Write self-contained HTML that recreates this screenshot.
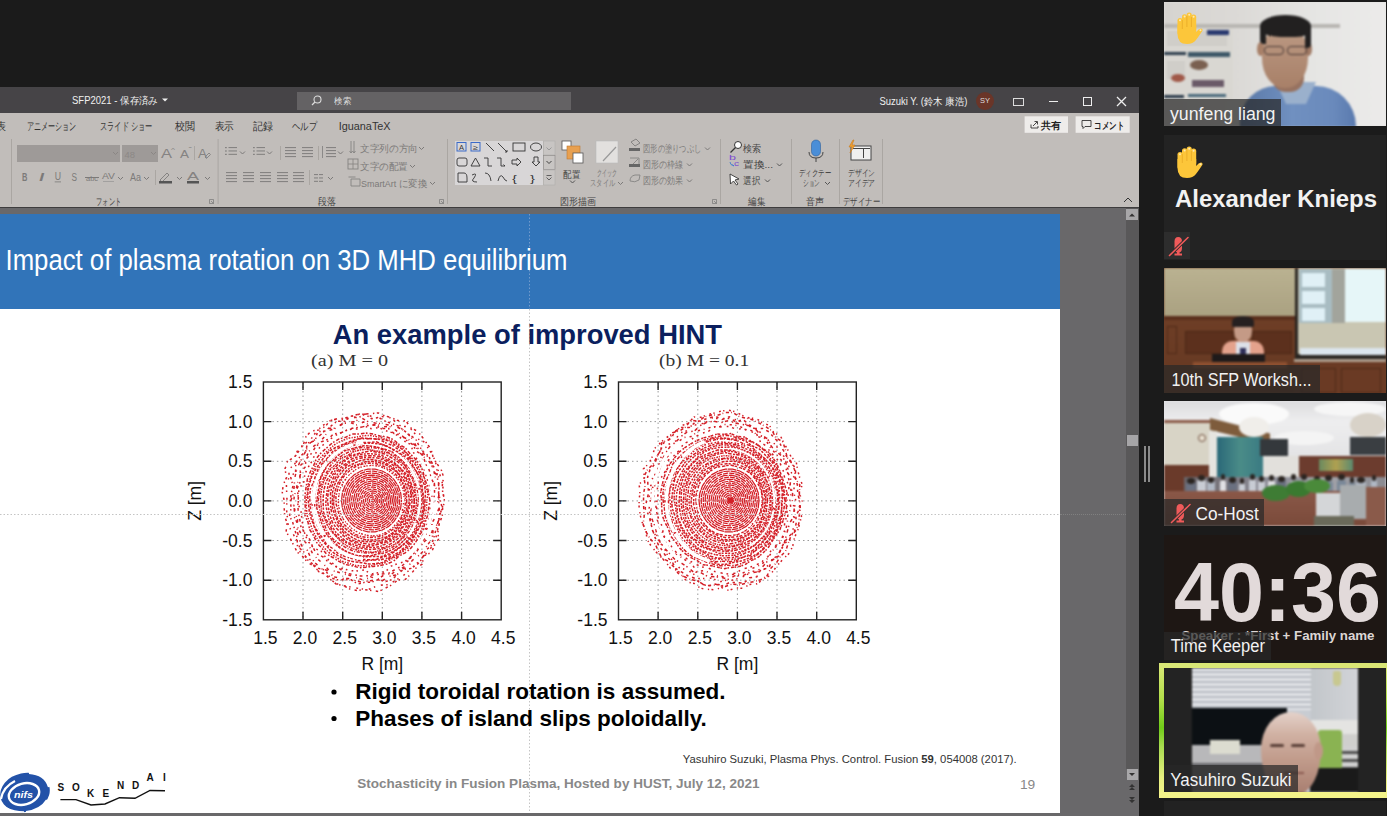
<!DOCTYPE html>
<html><head><meta charset="utf-8">
<style>
*{margin:0;padding:0;box-sizing:border-box}
html,body{width:1387px;height:816px;overflow:hidden;background:#1b1b1b;font-family:"Liberation Sans",sans-serif}
.a{position:absolute}
#ppt{position:absolute;left:0;top:87px;width:1139px;height:729px;background:#69686a;overflow:hidden}
#title{position:absolute;left:0;top:0;width:1139px;height:26px;background:#464447;color:#f0f0f0;font-size:10px}
#ribbon{position:absolute;left:0;top:26px;width:1139px;height:94px;background:#c1bdba;color:#333}
.tab{position:absolute;top:6px;font-size:10.5px;color:#333;white-space:nowrap;transform-origin:0 0}
.ic{position:absolute;color:#7c7a79;white-space:nowrap;font-size:10px;transform-origin:0 0}
.tx{position:absolute;color:#7c7a79;white-space:nowrap;font-size:9.5px;transform-origin:0 0}
.tk{position:absolute;color:#3a3a3a;white-space:nowrap;font-size:9.5px;transform-origin:0 0}
.sep{position:absolute;width:1px;background:#aaa6a3}
.grp{position:absolute;top:82px;font-size:9px;color:#444;white-space:nowrap}
#slide{position:absolute;left:0;top:127px;width:1060px;height:599px;background:#fff;overflow:hidden}
#hdr{position:absolute;left:0;top:0;width:1060px;height:95px;background:#3174b9}
#scroll{position:absolute;left:1126px;top:121px;width:13px;height:561px;background:#595859}
#side{position:absolute;left:1139px;top:0;width:248px;height:816px;background:#1b1b1b}
.tile{position:absolute;left:25px;width:222px;overflow:hidden}
.nm{position:absolute;left:0;bottom:0;height:27px;background:rgba(40,40,40,.72);color:#f4f4f4;font-size:17px;line-height:27px;padding:0 6px;white-space:nowrap}
.vid{position:absolute;left:0;top:0;width:222px;height:125px;overflow:hidden;filter:blur(1px)}
.mute{position:absolute;width:26px;height:27px;background:#2d2d2d}
</style></head>
<body>
<div id="ppt">
  <div id="title">
    <svg class="a" style="left:72px;top:0" width="100" height="26"><text x="0" y="17" textLength="86" lengthAdjust="spacingAndGlyphs" font-family="Liberation Sans" font-size="10" fill="#f0f0f0">SFP2021 - 保存済み</text><path d="M90 11.5h6l-3 3z" fill="#f0f0f0"/></svg>
    <div class="a" style="left:297px;top:5px;width:274px;height:18px;background:#646264"></div>
    <svg class="a" style="left:311px;top:8px" width="11" height="11" viewBox="0 0 11 11"><circle cx="6.5" cy="4.5" r="3.5" fill="none" stroke="#ddd" stroke-width="1.1"/><path d="M4 7L1 10" stroke="#ddd" stroke-width="1.2"/></svg>
    <svg class="a" style="left:334px;top:0" width="30" height="26"><text x="0" y="17" textLength="17" lengthAdjust="spacingAndGlyphs" font-family="Liberation Sans" font-size="9" fill="#ddd">検索</text></svg>
    <svg class="a" style="left:879px;top:0" width="92" height="26"><text x="0.5" y="17.5" textLength="88" lengthAdjust="spacingAndGlyphs" font-family="Liberation Sans" font-size="10" fill="#f0f0f0">Suzuki Y. (鈴木 康浩)</text></svg>
    <div class="a" style="left:976px;top:5px;width:18px;height:18px;border-radius:50%;background:#6a3528;color:#ddd;font-size:7.5px;line-height:18px;text-align:center">SY</div>
    <div class="a" style="left:1013px;top:11px;width:11px;height:8px;border:1.3px solid #ddd"></div>
    <div class="a" style="left:1049px;top:14px;width:9px;height:1.3px;background:#eee"></div>
    <div class="a" style="left:1083px;top:10px;width:9px;height:9px;border:1.3px solid #eee"></div>
    <svg class="a" style="left:1116px;top:9px" width="11" height="11" viewBox="0 0 11 11"><path d="M1 1L10 10M10 1L1 10" stroke="#eee" stroke-width="1.3"/></svg>
  </div>
  <div id="ribbon">
    <svg class="a" style="left:0;top:0" width="1139" height="94" font-family="Liberation Sans, sans-serif"><text x="-4" y="17" textLength="10" lengthAdjust="spacingAndGlyphs" font-size="10.5" fill="#333" font-weight="normal">表</text><text x="26.5" y="17" textLength="49.8" lengthAdjust="spacingAndGlyphs" font-size="10.5" fill="#333" font-weight="normal">アニメーション</text><text x="100" y="17" textLength="52.6" lengthAdjust="spacingAndGlyphs" font-size="10.5" fill="#333" font-weight="normal">スライド ショー</text><text x="175" y="17" textLength="20" lengthAdjust="spacingAndGlyphs" font-size="10.5" fill="#333" font-weight="normal">校閲</text><text x="214.8" y="17" textLength="19.2" lengthAdjust="spacingAndGlyphs" font-size="10.5" fill="#333" font-weight="normal">表示</text><text x="253" y="17" textLength="20" lengthAdjust="spacingAndGlyphs" font-size="10.5" fill="#333" font-weight="normal">記録</text><text x="292" y="17" textLength="25" lengthAdjust="spacingAndGlyphs" font-size="10.5" fill="#333" font-weight="normal">ヘルプ</text><text x="338.7" y="16.5" textLength="51.9" lengthAdjust="spacingAndGlyphs" font-size="10.5" fill="#333" font-weight="normal">IguanaTeX</text><rect x="1024.6" y="3.3" width="43.4" height="16.5" fill="#eeecea" /><rect x="1075.6" y="3.3" width="54.1" height="16.5" fill="#eeecea" /><path transform="translate(0 -113)" d="M1031 124.5v3.5h7v-2M1033 126l4-4M1034.5 121.5h3v3" stroke="#333" stroke-width="0.9" fill="none" /><text x="1041" y="15.5" textLength="20" lengthAdjust="spacingAndGlyphs" font-size="10" fill="#222" font-weight="bold">共有</text><path transform="translate(0 -113)" d="M1082 120.5h9v6h-6l-2 2v-2h-1z" stroke="#333" stroke-width="0.9" fill="none" /><text x="1094" y="15.5" textLength="30" lengthAdjust="spacingAndGlyphs" font-size="10" fill="#222" font-weight="bold">コメント</text><rect x="11" y="26" width="1" height="65" fill="#aaa6a2" /><rect x="217.6" y="26" width="1" height="65" fill="#aaa6a2" /><rect x="447" y="26" width="1" height="65" fill="#aaa6a2" /><rect x="720" y="26" width="1" height="65" fill="#aaa6a2" /><rect x="791" y="26" width="1" height="65" fill="#aaa6a2" /><rect x="839" y="26" width="1" height="65" fill="#aaa6a2" /><rect x="882" y="26" width="1" height="65" fill="#aaa6a2" /><rect x="17" y="32" width="103" height="17" fill="#9e9a98" /><rect x="122" y="32" width="36" height="17" fill="#9e9a98" /><path transform="translate(0 -113)" d="M113 152l2.5 2.5l2.5 -2.5" stroke="#8a8684" stroke-width="1" fill="none" /><path transform="translate(0 -113)" d="M151 152l2.5 2.5l2.5 -2.5" stroke="#8a8684" stroke-width="1" fill="none" /><text x="124.5" y="44.5" textLength="10.5" lengthAdjust="spacingAndGlyphs" font-size="9.5" fill="#8c8886" font-weight="normal">48</text><text x="161" y="45" textLength="11" lengthAdjust="spacingAndGlyphs" font-size="12.5" fill="#858382" font-weight="normal">A</text><text x="171" y="39" textLength="4" lengthAdjust="spacingAndGlyphs" font-size="6" fill="#858382" font-weight="normal">^</text><text x="180" y="45" textLength="9" lengthAdjust="spacingAndGlyphs" font-size="11" fill="#858382" font-weight="normal">A</text><text x="188.5" y="39" textLength="3.5" lengthAdjust="spacingAndGlyphs" font-size="7" fill="#858382" font-weight="normal">ˇ</text><rect x="194" y="33" width="1" height="14" fill="#aaa6a2" /><text x="198" y="45" textLength="9" lengthAdjust="spacingAndGlyphs" font-size="12" fill="#858382" font-weight="normal">A</text><path transform="translate(0 -113)" d="M205 157l4-4l1.5 1.5l-4 4z" stroke="#858382" stroke-width="0.9" fill="none" /><text x="22" y="67.5" textLength="5.4" lengthAdjust="spacingAndGlyphs" font-size="10" fill="#7c7a79" font-weight="bold">B</text><text x="39.3" y="67.5" textLength="4.7" lengthAdjust="spacingAndGlyphs" font-size="10" fill="#7c7a79" font-weight="bold" font-style="italic">I</text><text x="54.7" y="66.5" textLength="6.3" lengthAdjust="spacingAndGlyphs" font-size="10" fill="#7c7a79" font-weight="normal">U</text><rect x="54.7" y="68.5" width="6.3" height="0.8" fill="#7c7a79" /><text x="71.5" y="67.5" textLength="5.5" lengthAdjust="spacingAndGlyphs" font-size="10" fill="#7c7a79" font-weight="normal">S</text><text x="86" y="67.5" textLength="12" lengthAdjust="spacingAndGlyphs" font-size="8" fill="#7c7a79" font-weight="normal">abc</text><rect x="85" y="64" width="14" height="1" fill="#7c7a79" /><text x="102" y="65.5" textLength="13" lengthAdjust="spacingAndGlyphs" font-size="9.5" fill="#7c7a79" font-weight="normal">AV</text><path transform="translate(0 -113)" d="M103 181.5h11" stroke="#9a9898" stroke-width="0.8" fill="none" /><path transform="translate(0 -113)" d="M118 177l2.5 2.5l2.5 -2.5" stroke="#7c7a79" stroke-width="1" fill="none" /><text x="130" y="67.5" textLength="11" lengthAdjust="spacingAndGlyphs" font-size="10" fill="#7c7a79" font-weight="normal">Aa</text><path transform="translate(0 -113)" d="M144 177l2.5 2.5l2.5 -2.5" stroke="#7c7a79" stroke-width="1" fill="none" /><rect x="155" y="57" width="1" height="15" fill="#aaa6a2" /><path transform="translate(0 -113)" d="M160 180l7-7l2 2l-7 7z" stroke="#858382" stroke-width="1" fill="none" /><rect x="159" y="68" width="13" height="2.5" fill="#555" /><path transform="translate(0 -113)" d="M177 177l2.5 2.5l2.5 -2.5" stroke="#7c7a79" stroke-width="1" fill="none" /><text x="187" y="67" textLength="12" lengthAdjust="spacingAndGlyphs" font-size="11" fill="#858382" font-weight="normal">A</text><rect x="187" y="68" width="12" height="2.5" fill="#555" /><path transform="translate(0 -113)" d="M205 177l2.5 2.5l2.5 -2.5" stroke="#7c7a79" stroke-width="1" fill="none" /><text x="96" y="91.5" textLength="25" lengthAdjust="spacingAndGlyphs" font-size="9.5" fill="#444" font-weight="normal">フォント</text><path transform="translate(0 -113)" d="M209.5 199.5h4v4h-4zM211 201l2.5 2.5" stroke="#777" stroke-width="0.7" fill="none" /><rect x="225" y="34" width="1.8" height="1.2" fill="#858382" /><rect x="228.5" y="34" width="8.5" height="1.1" fill="#858382" /><rect x="225" y="37.4" width="1.8" height="1.2" fill="#858382" /><rect x="228.5" y="37.4" width="8.5" height="1.1" fill="#858382" /><rect x="225" y="40.8" width="1.8" height="1.2" fill="#858382" /><rect x="228.5" y="40.8" width="8.5" height="1.1" fill="#858382" /><path transform="translate(0 -113)" d="M240 151.5l2.5 2.5l2.5 -2.5" stroke="#7c7a79" stroke-width="1" fill="none" /><rect x="253" y="34" width="1.8" height="1.2" fill="#858382" /><rect x="256.5" y="34" width="8.5" height="1.1" fill="#858382" /><rect x="253" y="37.4" width="1.8" height="1.2" fill="#858382" /><rect x="256.5" y="37.4" width="8.5" height="1.1" fill="#858382" /><rect x="253" y="40.8" width="1.8" height="1.2" fill="#858382" /><rect x="256.5" y="40.8" width="8.5" height="1.1" fill="#858382" /><path transform="translate(0 -113)" d="M267 151.5l2.5 2.5l2.5 -2.5" stroke="#7c7a79" stroke-width="1" fill="none" /><rect x="280" y="33" width="1" height="14" fill="#aaa6a2" /><rect x="285" y="34" width="11" height="1.1" fill="#858382" /><rect x="285" y="37" width="11" height="1.1" fill="#858382" /><rect x="285" y="40" width="11" height="1.1" fill="#858382" /><rect x="285" y="43" width="11" height="1.1" fill="#858382" /><rect x="302" y="34" width="11" height="1.1" fill="#858382" /><rect x="302" y="37" width="11" height="1.1" fill="#858382" /><rect x="302" y="40" width="11" height="1.1" fill="#858382" /><rect x="302" y="43" width="11" height="1.1" fill="#858382" /><rect x="318" y="33" width="1" height="14" fill="#aaa6a2" /><rect x="326" y="34" width="10" height="1.1" fill="#858382" /><rect x="326" y="37" width="10" height="1.1" fill="#858382" /><rect x="326" y="40" width="10" height="1.1" fill="#858382" /><rect x="326" y="43" width="10" height="1.1" fill="#858382" /><path transform="translate(0 -113)" d="M322.5 146v12" stroke="#858382" stroke-width="0.9" fill="none" /><path transform="translate(0 -113)" d="M338 151.5l2.5 2.5l2.5 -2.5" stroke="#7c7a79" stroke-width="1" fill="none" /><path transform="translate(0 -113)" d="M351 141v12M354 141v12M349.5 151l1.5 2l1.5 -2M352.5 151l1.5 2l1.5 -2" stroke="#858382" stroke-width="0.9" fill="none" /><text x="360" y="39" textLength="58" lengthAdjust="spacingAndGlyphs" font-size="9.5" fill="#7c7a79" font-weight="normal">文字列の方向</text><path transform="translate(0 -113)" d="M419 147l2.5 2.5l2.5 -2.5" stroke="#7c7a79" stroke-width="1" fill="none" /><rect x="348" y="46" width="10" height="10" fill="none" stroke="#858382" stroke-width="0.9"/><path transform="translate(0 -113)" d="M353 159v10M348 164h10" stroke="#858382" stroke-width="0.8" fill="none" /><text x="360" y="56.5" textLength="48" lengthAdjust="spacingAndGlyphs" font-size="9.5" fill="#7c7a79" font-weight="normal">文字の配置</text><path transform="translate(0 -113)" d="M410 165l2.5 2.5l2.5 -2.5" stroke="#7c7a79" stroke-width="1" fill="none" /><path transform="translate(0 -113)" d="M348.5 177h7M351 179h9v7h-9z" stroke="#858382" stroke-width="0.9" fill="none" /><text x="361" y="74" textLength="66" lengthAdjust="spacingAndGlyphs" font-size="9.5" fill="#7c7a79" font-weight="normal">SmartArt に変換</text><path transform="translate(0 -113)" d="M430 182l2.5 2.5l2.5 -2.5" stroke="#7c7a79" stroke-width="1" fill="none" /><rect x="226" y="59" width="11" height="1.1" fill="#858382" /><rect x="226" y="62" width="11" height="1.1" fill="#858382" /><rect x="226" y="65" width="11" height="1.1" fill="#858382" /><rect x="226" y="68" width="11" height="1.1" fill="#858382" /><rect x="243" y="59" width="11" height="1.1" fill="#858382" /><rect x="243" y="62" width="11" height="1.1" fill="#858382" /><rect x="243" y="65" width="11" height="1.1" fill="#858382" /><rect x="243" y="68" width="11" height="1.1" fill="#858382" /><rect x="260" y="59" width="11" height="1.1" fill="#858382" /><rect x="260" y="62" width="11" height="1.1" fill="#858382" /><rect x="260" y="65" width="11" height="1.1" fill="#858382" /><rect x="260" y="68" width="11" height="1.1" fill="#858382" /><rect x="277" y="59" width="11" height="1.1" fill="#858382" /><rect x="277" y="62" width="11" height="1.1" fill="#858382" /><rect x="277" y="65" width="11" height="1.1" fill="#858382" /><rect x="277" y="68" width="11" height="1.1" fill="#858382" /><rect x="293" y="59" width="11" height="1.1" fill="#858382" /><rect x="293" y="62" width="11" height="1.1" fill="#858382" /><rect x="293" y="65" width="11" height="1.1" fill="#858382" /><rect x="293" y="68" width="11" height="1.1" fill="#858382" /><rect x="309" y="57" width="1" height="15" fill="#aaa6a2" /><rect x="314" y="61" width="4" height="1.1" fill="#858382" /><rect x="314" y="64.4" width="4" height="1.1" fill="#858382" /><rect x="314" y="67.8" width="4" height="1.1" fill="#858382" /><rect x="319" y="61" width="4" height="1.1" fill="#858382" /><rect x="319" y="64.4" width="4" height="1.1" fill="#858382" /><rect x="319" y="67.8" width="4" height="1.1" fill="#858382" /><path transform="translate(0 -113)" d="M328 177l2.5 2.5l2.5 -2.5" stroke="#7c7a79" stroke-width="1" fill="none" /><text x="318" y="91.5" textLength="18" lengthAdjust="spacingAndGlyphs" font-size="9.5" fill="#444" font-weight="normal">段落</text><path transform="translate(0 -113)" d="M439.5 199.5h4v4h-4zM441 201l2.5 2.5" stroke="#777" stroke-width="0.7" fill="none" /><rect x="455" y="28" width="88" height="44" fill="#d8d6d7" /><rect x="543.5" y="28" width="11.5" height="14" fill="#c8c5c3" stroke="#b0adab" stroke-width="0.6"/><rect x="543.5" y="42.5" width="11.5" height="14" fill="#c8c5c3" stroke="#8a8886" stroke-width="0.6"/><rect x="543.5" y="57" width="11.5" height="15" fill="#c8c5c3" stroke="#b0adab" stroke-width="0.6"/><path transform="translate(0 -113)" d="M546.5 147.5l2.5 2.5l2.5 -2.5" stroke="#999" stroke-width="1" fill="none" /><path transform="translate(0 -113)" d="M546.5 161l2.5 2.5l2.5 -2.5" stroke="#333" stroke-width="0.9" fill="none" /><path transform="translate(0 -113)" d="M546.5 175.5h5M546.5 177.5l2.5 2.5l2.5 -2.5" stroke="#555" stroke-width="0.9" fill="none" /><rect x="457" y="29.5" width="9" height="8.5" fill="none" stroke="#3a6ac8" stroke-width="1"/><text x="459" y="37" textLength="5" lengthAdjust="spacingAndGlyphs" font-size="7" fill="#333" font-weight="normal">A</text><rect x="471" y="29.5" width="9" height="8.5" fill="none" stroke="#3a6ac8" stroke-width="1"/><text x="473" y="37" textLength="5" lengthAdjust="spacingAndGlyphs" font-size="7" fill="#333" font-weight="normal">≥</text><path transform="translate(0 -113)" d="M486 143l8 8M498 143l9 9M505 152l2 0l0 -2" stroke="#333" stroke-width="0.9" fill="none" /><rect x="513" y="30" width="12" height="8" fill="none" stroke="#333" stroke-width="0.9"/><ellipse cx="536" cy="147" rx="5.5" ry="4" fill="none" stroke="#333" stroke-width="0.9" transform="translate(0 -113)"/><rect x="457" y="45" width="10" height="8" fill="none" stroke="#333" stroke-width="0.9" rx="2"/><path transform="translate(0 -113)" d="M471 166l4.5 -8l4.5 8z" stroke="#333" stroke-width="0.9" fill="none" /><path transform="translate(0 -113)" d="M484 158h4v8h4M497 158h4v8h4l-1.5 -1.5" stroke="#333" stroke-width="0.9" fill="none" /><path transform="translate(0 -113)" d="M512 160h5v-2l4 4l-4 4v-2h-5z" stroke="#333" stroke-width="0.9" fill="none" /><path transform="translate(0 -113)" d="M534 157v5h-2l4 4l4 -4h-2v-5z" stroke="#333" stroke-width="0.9" fill="none" /><path transform="translate(0 -113)" d="M458 173h6q3 0 3 5v4h-9z" stroke="#333" stroke-width="0.9" fill="none" /><path transform="translate(0 -113)" d="M472 175q6 -3 2 3q-4 4 3 4" stroke="#333" stroke-width="0.9" fill="none" /><path transform="translate(0 -113)" d="M485 173q5 0 6 8M498 181q2 -8 5 -4q2 4 4 4" stroke="#333" stroke-width="0.9" fill="none" /><text x="512" y="69" textLength="5" lengthAdjust="spacingAndGlyphs" font-size="9" fill="#333" font-weight="normal">{</text><text x="530" y="69" textLength="5" lengthAdjust="spacingAndGlyphs" font-size="9" fill="#333" font-weight="normal">}</text><rect x="562" y="28" width="9" height="9" fill="#fff" stroke="#555" stroke-width="0.8"/><rect x="567" y="33" width="13" height="13" fill="#e8a050" stroke="#c07830" stroke-width="0.6"/><rect x="573" y="40" width="10" height="10" fill="#fff" stroke="#555" stroke-width="0.8"/><text x="563" y="65" textLength="17" lengthAdjust="spacingAndGlyphs" font-size="9.5" fill="#444" font-weight="normal">配置</text><path transform="translate(0 -113)" d="M570 180.5l2.5 2.5l2.5 -2.5" stroke="#555" stroke-width="1" fill="none" /><rect x="596" y="28" width="22" height="22" fill="#e2e0de" stroke="#bbb" stroke-width="0.6"/><path transform="translate(0 -113)" d="M603 161l13 -14" stroke="#999" stroke-width="1.2" fill="none" /><text x="597" y="63" textLength="20" lengthAdjust="spacingAndGlyphs" font-size="9" fill="#7c7a79" font-weight="normal">クイック</text><text x="590" y="73" textLength="25" lengthAdjust="spacingAndGlyphs" font-size="9" fill="#7c7a79" font-weight="normal">スタイル</text><path transform="translate(0 -113)" d="M618 182l2.5 2.5l2.5 -2.5" stroke="#7c7a79" stroke-width="1" fill="none" /><path transform="translate(0 -113)" d="M631 142l5 -3l4 4l-5 3zM629 149h10" stroke="#858382" stroke-width="1" fill="none" /><rect x="629" y="35" width="11" height="3" fill="#666" /><text x="643" y="39" textLength="58" lengthAdjust="spacingAndGlyphs" font-size="9.5" fill="#7c7a79" font-weight="normal">図形の塗りつぶし</text><path transform="translate(0 -113)" d="M705 147.5l2.5 2.5l2.5 -2.5" stroke="#7c7a79" stroke-width="1" fill="none" /><path transform="translate(0 -113)" d="M630 158h9v6M632 165l6 -6" stroke="#858382" stroke-width="0.9" fill="none" /><rect x="629" y="51" width="11" height="3" fill="#666" /><text x="643" y="55" textLength="40" lengthAdjust="spacingAndGlyphs" font-size="9.5" fill="#7c7a79" font-weight="normal">図形の枠線</text><path transform="translate(0 -113)" d="M687 163.5l2.5 2.5l2.5 -2.5" stroke="#7c7a79" stroke-width="1" fill="none" /><path transform="translate(0 -113)" d="M630 181q0 -5 5 -6l5 0l-1 5q-4 3 -9 1z" stroke="#858382" stroke-width="0.9" fill="none" /><text x="643" y="71" textLength="40" lengthAdjust="spacingAndGlyphs" font-size="9.5" fill="#7c7a79" font-weight="normal">図形の効果</text><path transform="translate(0 -113)" d="M687 179.5l2.5 2.5l2.5 -2.5" stroke="#7c7a79" stroke-width="1" fill="none" /><text x="560" y="91.5" textLength="36" lengthAdjust="spacingAndGlyphs" font-size="9.5" fill="#444" font-weight="normal">図形描画</text><path transform="translate(0 -113)" d="M712.5 199.5h4v4h-4zM714 201l2.5 2.5" stroke="#777" stroke-width="0.7" fill="none" /><circle cx="738" cy="145" r="3.5" fill="#fff" stroke="#333" stroke-width="1" transform="translate(0 -113)"/><path transform="translate(0 -113)" d="M735.5 147.5l-5 5" stroke="#333" stroke-width="1.2" fill="none" /><text x="743" y="38.5" textLength="18" lengthAdjust="spacingAndGlyphs" font-size="9.5" fill="#444" font-weight="normal">検索</text><text x="729" y="47" textLength="7" lengthAdjust="spacingAndGlyphs" font-size="7" fill="#7a4ad0" font-weight="normal">b</text><text x="734" y="53" textLength="5" lengthAdjust="spacingAndGlyphs" font-size="7" fill="#7a4ad0" font-weight="normal">c</text><path transform="translate(0 -113)" d="M730 162q0 3 4 4l-1.5 -1.5" stroke="#3a7ad0" stroke-width="0.9" fill="none" /><text x="743" y="55" textLength="30" lengthAdjust="spacingAndGlyphs" font-size="9.5" fill="#444" font-weight="normal">置換...</text><path transform="translate(0 -113)" d="M777 163.5l2.5 2.5l2.5 -2.5" stroke="#555" stroke-width="1" fill="none" /><path transform="translate(0 -113)" d="M730 174l9 5l-4 1l3 4l-1.5 1l-3 -4l-3 3z" stroke="#333" stroke-width="0.9" fill="#fff" /><text x="743" y="71" textLength="17" lengthAdjust="spacingAndGlyphs" font-size="9.5" fill="#444" font-weight="normal">選択</text><path transform="translate(0 -113)" d="M765 179.5l2.5 2.5l2.5 -2.5" stroke="#555" stroke-width="1" fill="none" /><text x="748" y="91.5" textLength="17" lengthAdjust="spacingAndGlyphs" font-size="9.5" fill="#444" font-weight="normal">編集</text><rect x="811.5" y="27" width="9" height="16" fill="#4a8ed8" rx="4.5" stroke="#2f5f9a" stroke-width="0.6"/><path transform="translate(0 -113)" d="M809 152q0 6 7 6q7 0 7 -6M816 158v4" stroke="#444" stroke-width="1" fill="none" /><text x="799" y="63" textLength="32" lengthAdjust="spacingAndGlyphs" font-size="9" fill="#444" font-weight="normal">ディクテー</text><text x="803" y="73" textLength="17" lengthAdjust="spacingAndGlyphs" font-size="9" fill="#444" font-weight="normal">ション</text><path transform="translate(0 -113)" d="M825 182l2.5 2.5l2.5 -2.5" stroke="#555" stroke-width="1" fill="none" /><text x="806" y="91.5" textLength="18" lengthAdjust="spacingAndGlyphs" font-size="9.5" fill="#444" font-weight="normal">音声</text><rect x="851" y="33" width="20" height="14" fill="#f0f0f0" stroke="#444" stroke-width="1"/><rect x="863" y="35" width="1" height="10" fill="#444" /><rect x="853" y="35" width="17" height="1" fill="#444" /><path transform="translate(0 -113)" d="M853 140l-4 7h3l-2 6l5 -8h-3l2 -5z" stroke="#c87a20" stroke-width="0.6" fill="#f0a030" /><text x="848" y="63" textLength="27" lengthAdjust="spacingAndGlyphs" font-size="9" fill="#444" font-weight="normal">デザイン</text><text x="848" y="73" textLength="27" lengthAdjust="spacingAndGlyphs" font-size="9" fill="#444" font-weight="normal">アイデア</text><text x="843" y="91.5" textLength="37" lengthAdjust="spacingAndGlyphs" font-size="9.5" fill="#444" font-weight="normal">デザイナー</text><path transform="translate(0 -113)" d="M1124 202l4 -4l4 4" stroke="#333" stroke-width="1" fill="none" /></svg>
  </div>
  <div class="a" style="left:0;top:120px;width:1139px;height:1px;background:#3e3d3e"></div>
  <div class="a" style="left:1060px;top:427px;width:66px;height:0;border-top:1px dotted #808080"></div>
  <div id="scroll">
    <div class="a" style="left:0;top:1px;width:12px;height:11px;background:#a8a7a9"></div>
    <svg class="a" style="left:0;top:1px" width="12" height="11"><path d="M3 7.5L6 4.5L9 7.5Z" fill="#333"/></svg>
    <div class="a" style="left:1px;top:227px;width:11px;height:11px;background:#a6a5a7"></div>
  </div>
  <div class="a" style="left:1126.5px;top:682px;width:11.5px;height:11px;background:#a8a7a9"></div>
  <svg class="a" style="left:1126px;top:682px" width="12" height="11"><path d="M3 4L6 7L9 4Z" fill="#333"/></svg>
  <svg class="a" style="left:1126px;top:694px" width="12" height="24"><path d="M3 6L6 3L9 6ZM3 9L6 6L9 9ZM3 16L6 19L9 16ZM3 19L6 22L9 19Z" fill="#333"/></svg>
  <div id="slide">
    <div id="hdr"></div>
    <svg class="a" style="left:0;top:0" width="1060" height="599"><path d="M303 168V405.8M263.4 207.6H501.2M342.7 168V405.8M263.4 247.3H501.2M382.3 168V405.8M263.4 286.9H501.2M421.9 168V405.8M263.4 326.5H501.2M461.6 168V405.8M263.4 366.2H501.2" stroke="#9a9a9a" stroke-width="1" stroke-dasharray="1.5 3" fill="none"/><path d="M658.1 168V405.8M618.5 207.6H856.3M697.8 168V405.8M618.5 247.3H856.3M737.4 168V405.8M618.5 286.9H856.3M777 168V405.8M618.5 326.5H856.3M816.7 168V405.8M618.5 366.2H856.3" stroke="#9a9a9a" stroke-width="1" stroke-dasharray="1.5 3" fill="none"/><g fill="none" stroke="#d41e26"><path d="M374.4 286.5L374.3 287.1L374 287.6L373.5 288L372.9 288.1L372.4 288L371.9 287.6L371.5 287.1L371.4 286.5L371.5 285.9L371.9 285.4L372.4 285L372.9 284.9L373.5 285L374 285.4L374.3 285.9Z" stroke-dasharray="4.7 1.1" stroke-dashoffset="0.2" stroke-width="1.25" opacity="1"/><path d="M376.2 286.5L376 287.9L375.2 289L374.1 289.8L372.8 290.1L371.5 289.8L370.4 289L369.7 287.9L369.4 286.5L369.7 285.1L370.4 284L371.5 283.2L372.8 282.9L374.1 283.2L375.2 284L376 285.1Z" stroke-dasharray="4.1 0.9" stroke-dashoffset="1.5" stroke-width="1.25" opacity="1"/><path d="M378 286.5L377.6 288.6L376.5 290.4L374.8 291.6L372.7 292.1L370.7 291.6L369 290.4L367.8 288.6L367.4 286.5L367.8 284.4L369 282.6L370.7 281.4L372.7 280.9L374.8 281.4L376.5 282.6L377.6 284.4Z" stroke-dasharray="9 1.1" stroke-dashoffset="3.3" stroke-width="1.25" opacity="1"/><path d="M379.9 286.5L379.3 289.4L377.7 291.8L375.4 293.5L372.7 294.1L369.9 293.5L367.6 291.8L366 289.4L365.5 286.5L366 283.6L367.6 281.2L369.9 279.5L372.7 278.9L375.4 279.5L377.7 281.2L379.3 283.6Z" stroke-dasharray="4.9 0.9" stroke-dashoffset="7.9" stroke-width="1.25" opacity="1"/><path d="M381.7 286.5L381 290.2L379 293.3L376 295.3L372.6 296.1L369.1 295.3L366.1 293.3L364.2 290.2L363.5 286.5L364.2 282.8L366.1 279.7L369.1 277.7L372.6 276.9L376 277.7L379 279.7L381 282.8Z" stroke-dasharray="7.9 0.9" stroke-dashoffset="3.4" stroke-width="1.25" opacity="1"/><path d="M383.5 286.5L382.6 290.9L380.2 294.7L376.7 297.2L372.5 298.1L368.3 297.2L364.7 294.7L362.3 290.9L361.5 286.5L362.3 282.1L364.7 278.3L368.3 275.8L372.5 274.9L376.7 275.8L380.2 278.3L382.6 282.1Z" stroke-dasharray="4.3 1.1" stroke-dashoffset="6.5" stroke-width="1.25" opacity="1"/><path d="M385.3 286.5L384.3 291.7L381.5 296.1L377.3 299L372.4 300L367.4 299L363.3 296.1L360.5 291.7L359.5 286.5L360.5 281.3L363.3 276.9L367.4 274L372.4 273L377.3 274L381.5 276.9L384.3 281.3Z" stroke-dasharray="5.3 1.1" stroke-dashoffset="3.8" stroke-width="1.25" opacity="1"/><path d="M387.1 286.5L386 292.4L382.7 297.5L377.9 300.9L372.3 302L366.6 300.9L361.8 297.5L358.6 292.4L357.5 286.5L358.6 280.6L361.8 275.5L366.6 272.1L372.3 271L377.9 272.1L382.7 275.5L386 280.6Z" stroke-dasharray="4.1 0.8" stroke-dashoffset="7.8" stroke-width="1.25" opacity="1"/><path d="M388.9 286.5L387.6 293.2L384 298.9L378.6 302.7L372.2 304L365.8 302.7L360.4 298.9L356.8 293.2L355.5 286.5L356.8 279.8L360.4 274.1L365.8 270.3L372.2 269L378.6 270.3L384 274.1L387.6 279.8Z" stroke-dasharray="8 0.9" stroke-dashoffset="0.1" stroke-width="1.25" opacity="1"/><path d="M390.7 286.5L389.3 294L385.3 300.3L379.2 304.5L372.1 306L365 304.5L358.9 300.3L354.9 294L353.5 286.5L354.9 279L358.9 272.7L365 268.5L372.1 267L379.2 268.5L385.3 272.7L389.3 279Z" stroke-dasharray="8.4 0.5" stroke-dashoffset="4" stroke-width="1.25" opacity="1"/><path d="M392.5 286.5L391.3 293.9L387.7 300.3L382.3 305.1L375.6 307.7L368.4 307.7L361.8 305.1L356.3 300.3L352.7 293.9L351.5 286.5L352.7 279.1L356.3 272.7L361.8 267.9L368.4 265.3L375.6 265.3L382.3 267.9L387.7 272.7L391.3 279.1Z" stroke-dasharray="5.6 1.1" stroke-dashoffset="1.4" stroke-width="1.25" opacity="1"/><path d="M394.3 286.5L393.2 293.8L390 300.3L385.1 305.5L378.8 308.9L371.9 310L365 308.9L358.7 305.5L353.8 300.3L350.6 293.8L349.5 286.5L350.6 279.2L353.8 272.7L358.7 267.5L365 264.1L371.9 263L378.8 264.1L385.1 267.5L390 272.7L393.2 279.2Z" stroke-dasharray="8.6 0.6" stroke-dashoffset="3" stroke-width="1.25" opacity="1"/><path d="M396.1 286.5L395 294L391.9 300.9L387 306.4L380.7 310.3L373.6 311.9L366.4 311.4L359.7 308.6L354 303.9L349.9 297.6L347.8 290.3L347.8 282.7L349.9 275.4L354 269.1L359.7 264.4L366.4 261.6L373.6 261.1L380.7 262.7L387 266.6L391.9 272.1L395 279Z" stroke-dasharray="6.9 0.7" stroke-dashoffset="0.8" stroke-width="1.25" opacity="1"/><path d="M397.9 286.5L397 293.9L394.1 300.8L389.6 306.6L383.8 310.9L377.1 313.4L369.9 313.9L363 312.4L356.6 309L351.4 303.9L347.7 297.5L345.8 290.2L345.8 282.8L347.7 275.5L351.4 269.1L356.6 264L363 260.6L369.9 259.1L377.1 259.6L383.8 262.1L389.6 266.4L394.1 272.2L397 279.1Z" stroke-dasharray="8.6 0.8" stroke-dashoffset="5.3" stroke-width="1.25" opacity="1"/><path d="M399.7 286.5L398.9 293.8L396.3 300.7L392.1 306.7L386.7 311.4L380.3 314.6L373.4 315.9L366.4 315.5L359.7 313.2L353.7 309.2L348.9 303.8L345.5 297.4L343.8 290.2L343.8 282.8L345.5 275.6L348.9 269.2L353.7 263.8L359.7 259.8L366.4 257.5L373.4 257.1L380.3 258.4L386.7 261.6L392.1 266.3L396.3 272.3L398.9 279.2Z" stroke-dasharray="5.3 0.9" stroke-dashoffset="0.6" stroke-width="1.25" opacity="1"/><path d="M401.5 286.5L400.7 294L398.1 301.1L394 307.4L388.6 312.4L382.2 316L375.2 317.8L367.9 317.8L360.9 316L354.5 312.4L349.1 307.4L345 301.1L342.4 294L341.5 286.5L342.4 279L345 271.9L349.1 265.6L354.5 260.6L360.9 257L367.9 255.2L375.2 255.2L382.2 257L388.6 260.6L394 265.6L398.1 271.9L400.7 279Z" stroke-dasharray="7.2 0.7" stroke-dashoffset="5.5" stroke-width="1.25" opacity="1"/><path d="M403.9 286.5L402.9 293.9L401.5 301.5L397.8 308L392.8 313.6L386.9 318L380.3 321.1L373.1 321.9L366 321.2L359.2 319L353.1 315.3L347.9 310.3L343 304.7L340.1 297.8L338.3 290.3L338.7 282.7L340 275.2L343.3 268.4L347.7 262.5L353 257.6L359.1 253.6L366 252L373.1 251.4L380.2 252.3L386.8 255.4L392.5 259.8L397.8 265L401.3 271.6L403.6 278.9Z" stroke-dasharray="1.9 1 1.3 1.8" stroke-dashoffset="3.5" stroke-width="1.5" opacity="1"/><path d="M405.6 286.5L404.9 294L402.9 301.1L399.7 307.9L395.2 313.7L389.3 317.9L383.2 321.7L376.2 323.1L369.3 323.5L362.2 322.8L355.5 320.4L349.9 315.6L344.5 310.8L340.4 304.7L338.2 297.5L336.2 290.3L335.9 282.7L337.7 275.3L340.1 268.2L344.2 261.9L349.5 256.8L355.5 252.7L362.2 250.1L369.2 249L376.3 249.8L382.9 252L389.3 255.1L394.9 259.6L399.9 265L403.5 271.6L404.9 279.1Z" stroke-dasharray="3.2 1.3 1.5 1.5" stroke-dashoffset="5.5" stroke-width="1.5" opacity="1"/><path d="M406.6 286.5L407 294L404.9 301.2L401.7 307.8L397.2 313.5L392.4 319.1L386.3 323L379.3 324.5L372.5 326.1L365.4 325.7L358.7 323.6L352.4 320.5L346.9 315.9L341.6 311L337.6 304.8L335.5 297.6L333.6 290.3L334 282.7L335.6 275.5L338.2 268.6L342.2 262.6L346.5 256.6L352.2 252.3L358.9 250.1L365.5 247.7L372.4 247.4L379.3 248.6L385.9 250.8L392 254.5L397.6 259L401.2 265.5L404.4 272.1L406.5 279.1Z" stroke-dasharray="3.3 0.9 2 1" stroke-dashoffset="0.2" stroke-width="1.5" opacity="1"/><path d="M409.3 286.5L408.2 294.1L406.5 301.5L402.8 308L398.9 314.3L393.6 319.5L387.6 323.5L381 326.6L373.9 327.6L366.8 327.7L359.6 326.9L352.9 324L346.9 319.7L341.9 314.3L337.8 308.1L335 301.2L332.4 294.1L332.5 286.5L332.4 278.9L334.4 271.6L337.1 264.4L341.5 258.3L346.6 252.9L353.3 249.7L359.8 246.7L366.8 245.3L373.9 245.8L380.9 247.1L387.4 250L393.5 253.8L398.3 259.2L403.1 264.8L406.4 271.6L408.3 278.9Z" stroke-dasharray="3.1 1.1 2.7 1.1" stroke-dashoffset="3.2" stroke-width="1.5" opacity="1"/><path d="M410.3 286.5L409.3 293.9L407.7 301.2L405 308.1L401.1 314.4L396.1 319.7L390.2 323.8L384.1 327.6L377.1 329.1L370.1 330.4L363 329.3L356 327.7L349.5 324.7L344.2 319.5L339.5 314L335.1 308.1L332.3 301.2L330.7 293.9L330.5 286.5L330.5 279L332.1 271.7L335 264.8L338.5 258.2L343.8 253.1L349.6 248.6L356 245.3L363 243.7L370.1 243.5L377.1 243.9L383.8 246L390.2 249.1L396.1 253.3L401 258.7L405.4 264.7L408.4 271.5L410.7 278.8Z" stroke-dasharray="3.5 1.2 2 1.7" stroke-dashoffset="6.3" stroke-width="1.5" opacity="1"/><path d="M411.9 286.5L411.8 294L410.1 301.3L406.8 308L402.5 313.8L398.4 319.8L392.7 324.1L386.6 327.7L380 329.7L373.2 331.7L366.2 332.1L359.3 330.5L352.7 328L346.4 324.7L341.5 319.4L336.4 314.2L332.3 308.2L329.8 301.2L328.5 293.9L327.5 286.5L328.1 279.1L330.1 271.9L332.8 265.1L335.8 258.2L341.1 253.2L346.8 248.9L352.5 244.5L359.3 242.6L366.3 241.7L373.2 241.7L380.1 242.7L386.4 245.8L392.8 248.7L398.5 253.1L403.4 258.4L406.8 265L410.1 271.7L411.4 279.1Z" stroke-dasharray="3.6 1.3 2.6 1.6" stroke-dashoffset="4.5" stroke-width="1.5" opacity="1"/><path d="M414.5 286.5L413.5 294.2L411.9 301.7L408 308.2L405 315.1L399.9 320.5L394.2 324.9L388.1 328.7L381.7 331.9L374.8 333.6L367.7 333.2L360.5 333.1L353.8 330.4L346.9 328.2L341.4 323.3L335.8 318.3L331.8 311.9L328.8 305L327.1 297.7L325.7 290.3L326.3 282.8L327.3 275.4L328.7 268L332.3 261.4L336.1 254.9L341.6 250L347.1 245.1L353.6 241.8L360.6 240.3L367.7 239.8L374.7 239.9L381.6 241.4L388 244.7L394 248.3L399.4 253.1L404.6 258.2L408.9 264.3L411 271.6L412.6 279Z" stroke-dasharray="1.9 1.3 2.7 1.3" stroke-dashoffset="5.6" stroke-width="1.5" opacity="1"/><path d="M414.2 286.5L414.6 294L412.3 301.1L410.3 308.3L406.9 314.9L402.3 320.7L396.9 325.5L391 329.6L384.8 333.4L377.8 334.7L370.9 335.6L363.9 334.6L356.9 333.9L350.5 330.8L344.2 327.6L338.2 323.5L333.1 318.3L330 311.4L325.8 305.2L323.5 297.9L323.2 290.3L323.2 282.7L324.1 275.2L326 267.9L329.9 261.6L333.5 255.1L338.5 249.8L344.6 245.9L350.2 241.3L357.1 239.9L363.9 238.1L370.9 236.9L377.8 238.5L384.7 240L391 243.5L397.1 247.3L402.6 252L407.1 257.9L409.5 265.1L412 272L414.6 279Z" stroke-dasharray="3.5 1.5 2.2 1.3" stroke-dashoffset="0.3" stroke-width="1.5" opacity="1"/><path d="M416.7 286.5L416 293.9L414.7 301.3L412 308.2L408.4 314.5L404.5 320.7L399.9 326.5L393.9 330.6L387.5 333.5L380.8 335.7L374.1 338.3L367 338L360.1 336.6L353.3 335L347 331.8L341.1 327.8L336.3 322.6L331.4 317.4L327.4 311.3L324.6 304.6L321.5 297.8L321 290.2L320.6 282.7L321.5 275.2L323.5 268L326.6 261.2L330.6 254.9L335.9 250L340.7 244.5L347.3 241.8L353.3 237.8L360.1 236L367 235.1L373.9 236.5L380.7 237.6L387.7 238.8L393.8 242.6L399.5 247.1L405.2 251.6L408.3 258.5L412.2 264.7L414.5 271.8L415.4 279.2Z" stroke-dasharray="2.2 0.7 1.2 0.8" stroke-dashoffset="3.2" stroke-width="1.5" opacity="1"/><path d="M418.8 286.5L417.3 294L415.8 301.4L413.8 308.7L410.8 315.6L405.9 321.2L400.6 326.2L395.5 331.4L389.2 335L382.5 337.7L375.4 338.4L368.5 339.2L361.5 338.5L354.5 337.5L347.9 334.7L341.6 331.2L335.5 327.3L330.1 322L326.3 315.5L323.6 308.4L320.5 301.6L319.4 294L318.3 286.5L319.3 278.9L320.7 271.5L323.4 264.5L326.9 257.9L330.6 251.4L335.6 246L341.7 241.9L347.9 238.4L354.4 235.4L361.3 233.5L368.5 233.7L375.5 233.9L382.5 235.4L388.8 238.9L395.4 241.6L400.9 246.4L405.5 252.2L409.7 258.1L413.2 264.6L415.8 271.6L418 278.9Z" stroke-dasharray="3.3 1.4 1 1.5" stroke-dashoffset="4" stroke-width="1.5" opacity="1"/><path d="M419.3 286.5L420.1 294.1L417.8 301.4L415.9 308.7L412.5 315.4L408.4 321.6L403.4 326.9L398 331.8L392 335.7L385.5 338.7L378.5 339.8L371.7 341.6L364.6 341.9L357.4 341.6L350.6 339.3L344.1 336.1L338.1 332.1L333 326.7L327.7 321.7L324.1 315.2L321.3 308.3L319 301.2L316.8 294.1L316.9 286.5L317.9 279.1L319.2 271.8L320.6 264.4L323.9 257.7L327.5 251.1L333.1 246.3L338.3 241.3L344.1 236.9L351.1 235.1L357.8 233.1L364.6 231.6L371.6 232.2L378.4 233.5L385.1 235.3L391.8 237.7L397.7 241.7L402.8 246.9L407.6 252.2L412.7 257.5L415.8 264.3L417.6 271.7L420.1 278.9Z" stroke-dasharray="2.8 0.7 2.8 1.3" stroke-dashoffset="0.2" stroke-width="1.5" opacity="1"/><path d="M421.1 286.5L421.2 294L420 301.5L417.2 308.4L414.5 315.4L410.5 321.5L406.3 327.7L400.8 332.5L394.8 336.5L388.5 339.9L381.8 342.4L374.7 342.5L367.8 342.7L360.9 343.1L354 341.7L347.5 338.9L341.3 335.7L335.5 331.6L329.6 327.4L325 321.7L321.2 315.3L318.9 308.2L315.4 301.5L314.7 294L314.7 286.5L315.1 279.1L316 271.7L319.4 265.1L322.4 258.4L326.1 252.2L329.9 246L335.3 241.2L340.9 236.6L347.4 233.8L354 231.2L360.8 229.6L367.8 229L374.9 229.4L381.9 230.4L388.7 232.7L394.6 237L400.5 240.9L405.3 246.4L409.8 252.1L413.8 258.1L416.9 264.8L419.1 271.8L421.1 279Z" stroke-dasharray="2.4 1.4 2.4 1.2" stroke-dashoffset="1.3" stroke-width="1.5" opacity="1"/><path d="M422.9 286.5L423.2 294.2L421.6 301.7L418.8 308.7L415.9 315.7L412 322L407.3 327.7L401.6 332.2L395.9 336.7L390 340.8L383.1 342.9L376.4 345.4L369.3 345.8L362.2 345.4L355.2 344.4L348.5 341.7L341.9 339L335.9 335L330.9 329.7L326 324.4L321.8 318.4L317.6 312.2L315.4 305L314.1 297.6L312 290.3L313.1 282.8L313.4 275.2L314.7 267.7L317.3 260.6L321.1 254.2L324.8 247.6L330.1 242.5L335.5 237.4L341.9 233.9L348.1 230.2L355.2 228.6L362.3 228.6L369.3 228.5L376.4 227.8L383 230.8L389.4 233.6L395.8 236.6L401.8 240.5L407.7 244.9L411.7 251.2L416.2 257.2L419.5 264L420.6 271.6L422.8 278.9Z" stroke-dasharray="3.1 1.5 2.5 1.6" stroke-dashoffset="8" stroke-width="1.5" opacity="1"/><path d="M423.5 286.5L424 294L422.6 301.4L421 308.8L417.2 315.3L413.8 321.8L409.4 327.6L404.5 333.1L399.1 338L392.9 341.7L386.3 344.4L379.4 346.1L372.4 346.1L365.5 346.9L358.5 346.7L351.8 344.5L345 342.5L338.4 339.9L333.2 334.7L326.9 331L323 324.5L318.5 318.8L314.3 312.5L312.9 305L310.8 297.8L310.2 290.3L309.6 282.7L310.4 275.1L313.4 268.2L315.7 261.2L318.5 254.2L323 248.5L328.1 243.3L332.7 237.6L338.9 234L344.9 230.2L351.8 228.4L358.3 224.9L365.4 224.8L372.6 224.5L379.7 225.6L386.1 229L392.7 231.6L398.7 235.7L404.5 239.9L409.6 245.2L413.1 251.8L416.7 258L420.3 264.5L422 271.7L423 279.1Z" stroke-dasharray="2.9 1.1 1.7 2.1" stroke-dashoffset="1.6" stroke-width="1.5" opacity="1"/><path d="M424.9 286.5L424.8 293.9L423.3 301.1L422 308.4L418.6 314.9L415.1 321.2L411.2 327.4L406.6 333L401.1 337.6L395.5 342.1L388.9 344.7L382.7 348.4L375.7 349.6L368.6 350L361.7 348.7L354.8 348L347.9 346.5L341.5 343.5L335.3 340L329.6 335.7L325.2 329.8L320.4 324.5L316.7 318.2L313.8 311.5L311.2 304.7L309.3 297.6L308.6 290.2L307.7 282.7L308.1 275.2L310 267.9L312.3 260.8L316.3 254.5L320.3 248.5L324.5 242.5L329.4 237.1L335.6 233.5L342.1 230.8L348.4 228.1L354.9 225.7L361.7 223.9L368.6 224.6L375.5 224.9L382.5 225.4L389.4 227.1L395.3 231.3L401.5 234.8L406.9 239.6L411.2 245.6L415.8 251.2L419 257.9L421.8 264.7L424.6 271.6L425.5 279Z" stroke-dasharray="2.9 1.1 2.9 1.5" stroke-dashoffset="0.3" stroke-width="1.5" opacity="1"/><path d="M426.9 286.5L426.5 294L425.3 301.4L423.6 308.7L421.6 316.1L417.4 322.3L412.5 327.8L408.2 333.7L402.3 337.9L396.7 342.4L390.3 345.5L384.1 349.3L377 350L370.1 352L363 351.8L355.9 351.5L349 349.4L342.1 347.3L336 343.1L329.8 339.3L324.5 334.2L319.8 328.4L315.7 322.3L312.3 315.6L309.9 308.6L307.1 301.6L306.4 294L306.2 286.5L307.4 279.1L307.7 271.6L310.2 264.5L312.8 257.6L315.8 250.8L319.7 244.5L324.9 239.3L330.3 234.3L335.9 229.7L342.4 226.5L349.1 224.1L356.1 223.1L363 221.8L370.1 221.4L377.1 222.7L383.9 224.5L390.7 226.6L396.9 230.2L402.8 234.4L407.4 240.1L412.7 245.1L417.6 250.6L420.4 257.6L424.6 263.9L425.4 271.6L428 278.8Z" stroke-dasharray="1.7 1.3 1.2 1.2" stroke-dashoffset="1.7" stroke-width="1.5" opacity="1"/><path d="M429.9 286.5L428.7 294L427.6 301.5L425.1 308.5L423.1 315.8L419.1 322L415.5 328.5L410.8 334.2L405.2 338.8L398.9 342L393.6 347.2L387 350L380.1 351.6L373.2 352.4L366.2 353.3L359.2 353.7L352.3 351.8L345.3 350.5L338.9 347.3L332.8 343.5L326.4 339.9L321.8 334.1L316.8 328.7L313.7 321.8L309.7 315.6L308 308.3L305 301.5L305.3 293.9L304.9 286.5L305.2 279.1L306.3 271.9L307.5 264.5L310.4 257.7L313.8 251.2L316.6 244.2L321.4 238.5L326.9 233.7L332.4 228.9L338.6 225.1L345.6 223.3L352.1 220.1L359.2 220.1L366.2 219.1L373.2 220.1L380 221.9L387 223L393.6 225.7L399.1 230.5L405.4 233.9L410 239.7L415.1 244.8L419.8 250.5L423 257.3L424.5 264.7L427.3 271.6L428.5 279Z" stroke-dasharray="3.6 1.4 1.7 2" stroke-dashoffset="2.4" stroke-width="1.5" opacity="1"/><path d="M403.5 286.5L402.7 294L400.3 301.1L396.5 307.4L391.5 312.8L385.4 316.8L378.6 319.3L371.5 320.1L364.4 319.3L357.6 316.8L351.5 312.8L346.5 307.4L342.7 301.1L340.3 294L339.5 286.5L340.3 279L342.7 271.9L346.5 265.6L351.5 260.2L357.6 256.2L364.4 253.7L371.5 252.9L378.6 253.7L385.4 256.2L391.5 260.2L396.5 265.6L400.3 271.9L402.7 279Z" stroke-dasharray="7 2.5 4 3" stroke-dashoffset="5.8" stroke-width="1.2" opacity="1" stroke="#fff"/><path d="M432.9 286.5L430.1 294L430.2 301.8L427.6 308.9L425 316L422.2 322.9L418.8 329.6L416 337.3L410.5 342.4L405 347.6L397.8 349.6L391.2 352.1L385.5 357.7L378.4 358.7L371.3 360L364.3 356L357.4 356.9L350.4 356.6L343.6 354.9L336.7 352.8L331.1 347.9L325.5 343.2L321.1 337.2L313.8 334.1L308.8 328.3L305.2 321.3L303 313.6L302 305.7L301.1 298L298.4 290.5L298.1 282.5L299.1 274.6L303.9 267.9L304.8 260.2L308.1 253.4L312 247.1L315.1 240L319.4 233.9L325.2 229.3L330.9 224.7L336.9 220.7L343.4 217.5L350.2 215.4L357.3 214.9L364.2 211.8L371.2 214.7L378.5 213.5L385.2 216.5L392 218.6L398.5 222L404 227L410.6 230.4L413.4 238.3L416.9 244.9L423.7 249.1L424.5 257.3L426.9 264.3L429.3 271.4L431.3 278.8Z" stroke-dasharray="1.6 3.1 1.7 4.3" stroke-dashoffset="7.9" stroke-width="1.5" opacity="1"/><path d="M433.8 286.5L432.1 294.1L431.7 301.7L429.7 309L426.4 315.7L425.5 323.8L420.2 329.2L415.4 334.6L412 341.5L407.4 347.7L401.5 352.1L395.1 355.5L388.7 359.2L381.4 360L374.4 360.7L367.5 361.8L360.4 362L353.4 360.6L346.4 359.4L340.3 355.2L334.2 351.6L328.1 347.9L322.9 342.9L316.3 339.5L312.6 332.7L309.8 325.6L305.6 319.5L301 313.3L299.8 305.6L298.2 298.1L297.9 290.3L298.4 282.7L297 274.7L300.4 267.6L299.6 259.1L305.1 253.2L306.2 244.9L311.6 239.4L315.6 232.8L321.2 227.9L328.2 225.2L333.5 219.9L340.7 218.9L347 216L353.7 213.9L360.5 213.4L367.4 211.6L374.6 210.6L381.1 214.6L388.5 214.5L394.1 219.6L401.4 221L406.6 226.5L412.8 230.6L416.5 237.4L423.4 241.4L425.2 249.5L429.2 256L430.9 263.6L434.6 270.7L434.5 278.7Z" stroke-dasharray="2.8 2.8 1.7 3.8" stroke-dashoffset="4.9" stroke-width="1.5" opacity="1"/><path d="M438.7 286.5L438.8 294.6L436.1 302.2L431.9 309.1L432.2 317.5L427.9 324L422.6 329.4L418.2 335.2L414.3 341.6L408 345.3L404.3 352.8L397.8 356L391.6 359.9L384.4 360.7L378 365.2L370.6 362.9L363.6 366.1L356.6 363.7L349.8 361.4L342.9 359.9L336.3 357.5L328.8 356.1L323.8 350.2L318.1 345.5L312.8 340.2L309.6 333L304.6 327.4L301.3 320.4L297.8 313.6L297.5 305.5L294.7 298.2L293.5 290.4L294.2 282.6L296.2 275L297.9 267.6L300.4 260.5L300 251.8L305.7 246.4L308 238.7L312.8 232.8L319 228.7L324 223.2L328.7 216.6L335.8 214.3L342 210L349.1 208.2L356.8 210.9L363.6 208L370.5 211.4L377.5 210.9L384.3 212.6L391.6 212.9L397.5 217.6L402.7 222.9L409.2 226L414.7 230.9L418.7 237.3L423.7 242.8L429.6 248L433.4 255L435.2 262.8L434.2 271.2L438.8 278.4Z" stroke-dasharray="2.9 2.6 0.9 5.3" stroke-dashoffset="3.7" stroke-width="1.5" opacity="1"/><path d="M437.6 286.5L439.2 294.3L440.1 302.4L437.5 309.9L433.1 316.5L432.2 324.6L427.7 330.8L423.5 337L418.1 342.1L412.2 346.4L408.1 353L401.2 355.4L396 361L388.9 362.3L382.7 366.4L375.5 366.2L368.5 367L361.5 368.1L354.6 366.4L347.9 364.4L340.6 364.4L333.4 362.7L328.3 356.6L320.9 354.7L315.6 349.3L310.6 343.6L307.4 336.4L301.5 331.5L298.9 324L297.1 316.4L297 308.5L293.6 301.7L295.1 293.8L290.9 286.5L293.6 279L294.2 271.5L294.8 263.8L296.5 256.3L299.3 249.2L303 242.6L306.3 235.7L310.1 228.9L316.4 224.7L321.8 219.7L327.1 214.2L335 214.2L341.3 210.8L347.8 208.2L354.7 207.6L361.5 203.9L368.5 207.9L375.2 209.1L382 209.7L388.8 211.1L395.7 212.6L402.4 215.4L408 220.1L413 225.6L416.4 232.7L421.1 238L427.5 242.4L432 248.5L433 256.6L438.4 262.8L438.5 270.9L439.6 278.7Z" stroke-dasharray="3.1 2.4 1.1 5.6" stroke-dashoffset="4.9" stroke-width="1.5" opacity="1"/><path d="M440.3 286.5L442.3 294.4L439.4 301.8L437.7 309.3L435.7 316.7L433.7 324.2L431.1 331.7L425.2 336.8L422.5 344.4L417.5 350.2L411.3 354.4L403.5 355.3L397.9 359.8L392.6 365.5L385.7 367.5L378.2 365.6L371.6 368.2L364.8 368.3L357.7 370.1L351.3 365.8L344.2 365.8L336.9 365.7L329.9 363.4L325.5 356.2L318.2 354.3L312.3 349.7L306.5 344.9L303.5 337.4L297.4 332.4L297.2 323.5L294.9 316.3L292.9 309L289.6 301.9L291.1 294L290.4 286.5L291.3 279L293 271.8L290.7 263.3L295.6 257.1L295.8 248.7L300.1 242.4L305.7 237.4L307.5 229L315.2 226.7L317.5 217.7L325.6 217L331 212L336.9 207.3L344.3 207.3L350.4 201.8L357.8 204.1L364.8 200.2L371.6 204.7L378.8 203.6L385.3 207.2L391.8 209.6L398.4 212.1L404.1 216.6L409.7 221L415.7 225L419.1 232L423.3 237.8L429.2 242.6L431.2 250.1L436.9 255.8L437.2 263.8L439.3 271.2L438.5 279Z" stroke-dasharray="1.4 2.4 2.4 3.1" stroke-dashoffset="0.2" stroke-width="1.5" opacity="1"/><path d="M444.4 286.5L442.1 294.2L439.6 301.5L439.3 309.2L438.2 316.9L435.6 324.2L432.7 331.4L428.3 337.5L422.9 342.7L418.1 348.2L412.8 353.2L407.3 357.9L401.9 363L395.4 366.2L389.3 370.6L382 371L375.1 372.8L368.1 375.6L360.8 374.9L353.7 373.5L346.6 372.2L339.4 371.2L333.1 367.3L327.5 362L321.5 358L315.2 354.4L311.9 346.9L305.9 342.7L300.1 337.9L299 329.5L295 323.3L291.2 316.8L287.9 309.7L287.2 301.9L286.4 294.2L287 286.5L286.7 278.8L286.4 270.9L289 263.6L289 255.4L295 249.7L295.1 240.9L299.1 234.3L305.1 229.5L311 225.1L315.4 218.9L320.6 213.4L326.4 208.8L332.9 205.3L340.7 206.1L347.5 205L354.2 203.7L360.9 198.8L367.9 200.7L374.6 204.1L381.9 202.6L389 203.2L395.2 207.4L400.8 212.2L408.7 212.7L414 218.2L417.9 225L425 228.3L428.7 235.2L433 241.4L435.6 248.8L438.1 256.1L440.8 263.3L442.8 270.9L443.2 278.7Z" stroke-dasharray="1.4 3.6 1.9 5.8" stroke-dashoffset="6.9" stroke-width="1.5" opacity="1"/><path d="M444.9 286.5L442.6 294L442.3 301.7L439.8 308.8L437.5 315.9L438.7 324.8L434.5 331.2L431.4 338.4L424 341.8L422.1 350.2L415.8 354.2L410.9 360L405.5 365.3L397.8 366L392 370.8L385.5 374.1L378.7 377.5L371.3 376.5L364.1 375.6L357 376.5L349.9 375.1L343.4 371.6L336.4 370.2L330.6 365.6L325.2 360.6L318.8 357.7L314.1 352.1L307.7 348.5L303 342.9L297.2 338.1L293.7 331.2L290.2 324.4L286.1 317.7L287 309.2L284.7 301.9L284.2 294.2L284.2 286.5L282.3 278.6L283.2 270.8L286.5 263.6L285 254.8L287.6 247.3L295 242.6L299.2 236.5L303.4 230.5L306 222.6L311.1 217L319.2 215.9L325.2 212.4L330.2 206.6L337.1 204.8L344.1 204.2L350.7 202.6L357.3 200.5L364.1 200L371 199.6L378.2 198.9L384.8 201.8L391.5 203.8L398 206.6L406 206.8L410.4 213.7L417.1 217L422.1 222.7L426.5 229L431 235L433 242.7L436.7 249.3L441.2 255.6L443.6 263.1L442.3 271.3L442.7 278.9Z" stroke-dasharray="1.4 2.5 2.4 4.4" stroke-dashoffset="7.2" stroke-width="1.5" opacity="1"/><path d="M363 344.6A54 58.3 0 0 1 363 228.4" stroke="#fff" stroke-width="3.4" stroke-dasharray="45 2 30 3"/><path d="M394.1 237.9A52 56.2 0 0 1 407.9 322.6" stroke="#fff" stroke-width="2.2" stroke-dasharray="45 2 30 3"/><path d="M416.8 240A67 72.4 0 0 1 408.6 341.9" stroke="#fff" stroke-width="2.8" stroke-dasharray="45 2 30 3"/></g><g fill="none" stroke="#d41e26"><path d="M731.9 286.5L731.8 287.1L731.5 287.6L731 288L730.4 288.1L729.9 288L729.4 287.6L729 287.1L728.9 286.5L729 285.9L729.4 285.4L729.9 285L730.4 284.9L731 285L731.5 285.4L731.8 285.9Z" stroke-dasharray="8.8 1.2" stroke-dashoffset="2.1" stroke-width="1.25" opacity="1"/><path d="M733.7 286.5L733.5 287.9L732.7 289L731.6 289.8L730.3 290.1L729 289.8L727.9 289L727.2 287.9L726.9 286.5L727.2 285.1L727.9 284L729 283.2L730.3 282.9L731.6 283.2L732.7 284L733.5 285.1Z" stroke-dasharray="4.2 0.5" stroke-dashoffset="7.3" stroke-width="1.25" opacity="1"/><path d="M735.5 286.5L735.1 288.6L734 290.4L732.3 291.6L730.2 292.1L728.2 291.6L726.5 290.4L725.3 288.6L724.9 286.5L725.3 284.4L726.5 282.6L728.2 281.4L730.2 280.9L732.3 281.4L734 282.6L735.1 284.4Z" stroke-dasharray="7.8 1.1" stroke-dashoffset="7.4" stroke-width="1.25" opacity="1"/><path d="M737.4 286.5L736.8 289.4L735.2 291.8L732.9 293.5L730.2 294.1L727.4 293.5L725.1 291.8L723.5 289.4L723 286.5L723.5 283.6L725.1 281.2L727.4 279.5L730.2 278.9L732.9 279.5L735.2 281.2L736.8 283.6Z" stroke-dasharray="7.6 0.8" stroke-dashoffset="7.5" stroke-width="1.25" opacity="1"/><path d="M739.2 286.5L738.5 290.2L736.5 293.3L733.5 295.3L730.1 296.1L726.6 295.3L723.6 293.3L721.7 290.2L721 286.5L721.7 282.8L723.6 279.7L726.6 277.7L730.1 276.9L733.5 277.7L736.5 279.7L738.5 282.8Z" stroke-dasharray="7.1 0.6" stroke-dashoffset="5.7" stroke-width="1.25" opacity="1"/><path d="M741 286.5L740.1 290.9L737.7 294.7L734.2 297.2L730 298.1L725.8 297.2L722.2 294.7L719.8 290.9L719 286.5L719.8 282.1L722.2 278.3L725.8 275.8L730 274.9L734.2 275.8L737.7 278.3L740.1 282.1Z" stroke-dasharray="4.2 0.8" stroke-dashoffset="2.8" stroke-width="1.25" opacity="1"/><path d="M742.8 286.5L741.8 291.7L739 296.1L734.8 299L729.9 300L724.9 299L720.8 296.1L718 291.7L717 286.5L718 281.3L720.8 276.9L724.9 274L729.9 273L734.8 274L739 276.9L741.8 281.3Z" stroke-dasharray="7.1 1" stroke-dashoffset="1" stroke-width="1.25" opacity="1"/><path d="M744.6 286.5L743.5 292.4L740.2 297.5L735.4 300.9L729.8 302L724.1 300.9L719.3 297.5L716.1 292.4L715 286.5L716.1 280.6L719.3 275.5L724.1 272.1L729.8 271L735.4 272.1L740.2 275.5L743.5 280.6Z" stroke-dasharray="6.9 0.8" stroke-dashoffset="8" stroke-width="1.25" opacity="1"/><path d="M746.4 286.5L745.1 293.2L741.5 298.9L736.1 302.7L729.7 304L723.3 302.7L717.9 298.9L714.3 293.2L713 286.5L714.3 279.8L717.9 274.1L723.3 270.3L729.7 269L736.1 270.3L741.5 274.1L745.1 279.8Z" stroke-dasharray="5.2 0.8" stroke-dashoffset="1.7" stroke-width="1.25" opacity="1"/><path d="M748.2 286.5L746.8 294L742.8 300.3L736.7 304.5L729.6 306L722.5 304.5L716.4 300.3L712.4 294L711 286.5L712.4 279L716.4 272.7L722.5 268.5L729.6 267L736.7 268.5L742.8 272.7L746.8 279Z" stroke-dasharray="6.6 0.8" stroke-dashoffset="7.4" stroke-width="1.25" opacity="1"/><path d="M750 286.5L748.8 293.9L745.2 300.3L739.8 305.1L733.1 307.7L725.9 307.7L719.3 305.1L713.8 300.3L710.2 293.9L709 286.5L710.2 279.1L713.8 272.7L719.3 267.9L725.9 265.3L733.1 265.3L739.8 267.9L745.2 272.7L748.8 279.1Z" stroke-dasharray="7.1 0.7" stroke-dashoffset="6" stroke-width="1.25" opacity="1"/><path d="M751.8 286.5L750.7 293.8L747.5 300.3L742.6 305.5L736.3 308.9L729.4 310L722.5 308.9L716.2 305.5L711.3 300.3L708.1 293.8L707 286.5L708.1 279.2L711.3 272.7L716.2 267.5L722.5 264.1L729.4 263L736.3 264.1L742.6 267.5L747.5 272.7L750.7 279.2Z" stroke-dasharray="5 0.9" stroke-dashoffset="3.8" stroke-width="1.25" opacity="1"/><path d="M753.6 286.5L752.5 294L749.4 300.9L744.5 306.4L738.2 310.3L731.1 311.9L723.9 311.4L717.2 308.6L711.5 303.9L707.4 297.6L705.3 290.3L705.3 282.7L707.4 275.4L711.5 269.1L717.2 264.4L723.9 261.6L731.1 261.1L738.2 262.7L744.5 266.6L749.4 272.1L752.5 279Z" stroke-dasharray="8.8 1.1" stroke-dashoffset="2.4" stroke-width="1.25" opacity="1"/><path d="M755.4 286.5L754.5 293.9L751.6 300.8L747.1 306.6L741.3 310.9L734.6 313.4L727.4 313.9L720.5 312.4L714.1 309L708.9 303.9L705.2 297.5L703.3 290.2L703.3 282.8L705.2 275.5L708.9 269.1L714.1 264L720.5 260.6L727.4 259.1L734.6 259.6L741.3 262.1L747.1 266.4L751.6 272.2L754.5 279.1Z" stroke-dasharray="5.2 1" stroke-dashoffset="4.1" stroke-width="1.25" opacity="1"/><path d="M757.2 286.5L756.4 293.8L753.8 300.7L749.6 306.7L744.2 311.4L737.8 314.6L730.9 315.9L723.9 315.5L717.2 313.2L711.2 309.2L706.4 303.8L703 297.4L701.3 290.2L701.3 282.8L703 275.6L706.4 269.2L711.2 263.8L717.2 259.8L723.9 257.5L730.9 257.1L737.8 258.4L744.2 261.6L749.6 266.3L753.8 272.3L756.4 279.2Z" stroke-dasharray="6.4 0.8" stroke-dashoffset="7.2" stroke-width="1.25" opacity="1"/><path d="M759 286.5L758.2 294L755.6 301.1L751.5 307.4L746.1 312.4L739.7 316L732.7 317.8L725.4 317.8L718.4 316L712 312.4L706.6 307.4L702.5 301.1L699.9 294L699 286.5L699.9 279L702.5 271.9L706.6 265.6L712 260.6L718.4 257L725.4 255.2L732.7 255.2L739.7 257L746.1 260.6L751.5 265.6L755.6 271.9L758.2 279Z" stroke-dasharray="8.4 0.6" stroke-dashoffset="0.6" stroke-width="1.25" opacity="1"/><circle cx="730.5" cy="286.5" r="3" fill="#d41e26" stroke="none"/><path d="M762.1 286.5L761.3 294.2L759 301.4L754.6 307.5L749.8 313L744.2 317.5L737.7 320.5L730.6 321.7L723.5 321.1L716.5 319.6L710 316.2L705 310.6L700.7 304.6L697.9 297.7L696.3 290.3L695.7 282.6L697.6 275.3L700.2 268.1L704.7 262L710.2 257.1L716.4 253.2L723.6 252.2L730.6 251.1L737.5 252.9L744.3 255.3L750.4 259.4L755.3 264.9L758.9 271.6L761.6 278.8Z" stroke-dasharray="3.4 0.8 2.5 1.9" stroke-dashoffset="0.7" stroke-width="1.5" opacity="1"/><path d="M763.2 286.5L762.3 293.9L760.3 301.1L757.2 307.9L752.5 313.5L747 318.2L740.8 322.1L733.7 323L726.7 324L719.9 322.2L713.3 319.6L707.4 315.7L702.5 310.4L698 304.6L695.4 297.6L693.6 290.3L693.8 282.7L694.8 275.2L697.7 268.2L702.3 262.4L707.2 257.1L713.1 252.8L719.8 250.7L726.8 249.7L733.8 249.7L740.6 251.6L747.2 254.5L752.5 259.5L757 265.3L760.7 271.7L762.1 279.1Z" stroke-dasharray="3.1 1 2.1 2" stroke-dashoffset="6.5" stroke-width="1.5" opacity="1"/><path d="M765.2 286.5L764.2 293.9L762.6 301.2L759.7 308.1L755.1 314L749.8 318.9L743.7 322.7L737 325.1L729.9 325.8L722.9 325.7L716.4 323.1L709.9 320.5L704.1 316.3L699.4 310.7L695.5 304.5L693.1 297.5L690.9 290.3L691.7 282.8L693 275.5L695.3 268.4L699.8 262.6L704 256.6L710.1 253L716.4 250L723 247.7L729.9 247.2L737 247.6L743.7 250.1L749.7 254.2L754.7 259.5L759 265.3L761.8 272.1L764.3 279Z" stroke-dasharray="3.1 1 2.6 1.3" stroke-dashoffset="3.1" stroke-width="1.5" opacity="1"/><path d="M765.8 286.5L765.4 294L763.7 301.3L760.6 308.2L756.5 314.4L751.1 319.4L745 323.3L738.3 325.8L731.4 327L724.3 327.4L717.5 325.7L710.8 323.1L704.5 319.7L699.7 314L695.2 308.1L691.3 301.7L689.8 294.1L688.9 286.5L690.4 279L692.1 271.7L695 264.7L699.7 259.1L704.6 253.5L710.7 249.5L717.3 246.9L724.2 244.6L731.4 245.3L738.5 246.6L745.2 249.3L751 253.7L756.6 258.5L760.5 264.9L763.6 271.7L765.6 279Z" stroke-dasharray="2.2 1.2 1.3 1.2" stroke-dashoffset="7.9" stroke-width="1.5" opacity="1"/><path d="M767.4 286.5L766.7 293.9L765.8 301.4L761.9 307.7L758.7 314.5L753.6 319.7L748 324.4L741.3 326.8L734.6 329.1L727.6 330.4L720.6 328.7L713.9 326.8L707.5 323.7L702 319.1L697.2 313.8L692.6 308.1L690.3 301L687.3 294.1L686.9 286.5L688.1 279.1L688.9 271.4L692.6 264.9L696.4 258.6L701.5 253.2L707.6 249.5L713.8 246.1L720.7 244.8L727.6 244L734.6 243.6L741.5 245.6L747.8 249L753.8 253L759.1 258.2L762.4 265L765.7 271.6L767 279.1Z" stroke-dasharray="4 1.4 1.9 1.4" stroke-dashoffset="0.9" stroke-width="1.5" opacity="1"/><path d="M769.9 286.5L769.4 294L767.6 301.3L764.5 308L760.4 314.1L756 319.9L750 323.7L744 327.3L737.7 330.8L730.8 331.9L723.8 331.5L716.8 330.5L710.3 327.9L704.1 324.4L698.7 319.7L694.1 314.1L690 308.1L687.2 301.2L685.8 293.9L685.2 286.5L685.9 279.1L686.9 271.7L689.4 264.6L693.9 258.8L698.2 252.8L703.9 248.2L710.1 244.8L717 243.3L723.8 241.6L730.7 242.1L737.4 243.4L744.1 245.3L750.4 248.6L755.9 253.1L760.9 258.5L764.8 264.7L767.5 271.7L768.6 279.1Z" stroke-dasharray="1.8 0.8 1.1 1.1" stroke-dashoffset="6.2" stroke-width="1.5" opacity="1"/><path d="M770.8 286.5L770.9 294.2L769.1 301.6L765.7 308.3L762.7 315.2L757.8 320.9L752.1 325.6L745.7 328.8L739 331.2L732.2 332.7L725.1 334L718 333.1L711.3 330.6L704.4 328.1L698.8 323.4L693.8 317.9L689.6 311.7L686.1 305.1L684.3 297.7L683 290.3L683.8 282.8L684.1 275.2L686.8 268.2L689.2 261L694.1 255.4L699 249.9L704.7 245.3L711.2 242.2L718 240L725.1 238.6L732.2 240.1L739.2 241L745.8 243.9L752 247.6L757.2 252.8L762 258.3L765.7 264.7L768.8 271.5L770.4 278.9Z" stroke-dasharray="3.6 1.4 2.2 0.9" stroke-dashoffset="1.5" stroke-width="1.5" opacity="1"/><path d="M772.4 286.5L772.4 294.1L771 301.5L767.4 308.1L764.1 314.8L759.6 320.5L754.6 325.8L748.5 329.6L742 332.3L735.3 334.3L728.4 336.2L721.3 335.3L714.5 333.5L707.5 332.2L701.7 327.7L696.1 323.2L691.3 317.6L687.5 311.4L683.9 304.9L682.4 297.6L681.2 290.2L681.2 282.8L681.6 275.2L684.6 268.4L686.9 261.2L691.3 255.4L696.1 249.9L701.4 244.8L707.8 241.5L714.5 239.6L721.3 237.5L728.4 236.9L735.3 238.3L742 240.6L748.6 243.2L754.7 247.1L759.3 252.9L764 258.4L768.5 264.3L771.3 271.4L771.9 279Z" stroke-dasharray="2.7 0.8 1.9 1.6" stroke-dashoffset="5.6" stroke-width="1.5" opacity="1"/><path d="M774 286.5L773.3 293.9L772.5 301.4L769.2 308L766.3 314.8L761.6 320.4L756.6 325.5L751.4 330.5L744.8 333.1L738.3 335.7L731.5 337L724.6 337.2L717.6 336.5L710.7 335.2L704.1 332.8L698.6 327.9L692.5 324L688.1 318L685.1 311.2L681.5 304.8L680 297.5L678.9 290.2L679.5 282.8L679.9 275.4L681.8 268.3L684.3 261.3L688.3 255.1L692.7 249.3L698.1 244.3L704.4 241.1L711 238.5L717.6 236L724.6 235.9L731.4 236.3L738.3 237.5L744.9 239.7L751.1 243L756.8 247.3L762.2 252.1L765.6 258.7L769.7 264.7L771.7 271.9L774.1 279Z" stroke-dasharray="3.7 1.1 2.4 1.5" stroke-dashoffset="3.5" stroke-width="1.5" opacity="1"/><path d="M775.3 286.5L774.9 294L774.4 301.7L771.5 308.8L767.5 315.1L764.1 321.8L758.5 326.7L753.3 332L746.7 335L740 337.8L733.1 339.4L726 339.3L718.9 339.4L712.3 336.4L705.5 334.4L698.9 331.6L693.9 326.1L688.1 321.6L683.3 315.8L680.2 308.9L677.5 301.7L677.2 294L676.1 286.5L676.7 278.9L678.6 271.6L681.2 264.6L684.1 257.7L689.1 252.3L694.1 247.1L699.1 241.8L705.1 237.5L711.8 234.9L718.8 233.4L726 233.3L733.2 232.9L739.9 235.9L746.5 238.3L753.1 241.4L758.8 245.9L763.2 252L768 257.6L770.3 264.9L773.4 271.6L774.2 279.1Z" stroke-dasharray="1.9 0.9 2.3 1.5" stroke-dashoffset="1.9" stroke-width="1.5" opacity="1"/><path d="M777.8 286.5L776.3 293.9L775.5 301.4L773 308.5L769.4 315L765.9 321.5L760.2 326.1L755.1 331.1L749.1 335L742.7 337.9L736.2 341.1L729.2 341.6L722.1 341.7L715.1 340.6L708.3 338.7L701.5 336.5L695.5 332.2L690.2 327.1L686 321L681.6 315.2L679.1 308.1L676.6 301.2L675.7 293.8L674.2 286.5L674.2 278.9L676 271.6L678.4 264.5L681.9 258L685.6 251.6L690.3 246L695.8 241.2L702 237.6L708.5 234.7L715.1 232L722.1 230.8L729.2 231.2L736.1 232.6L742.5 235.7L749 238.2L755.5 241.3L761.1 245.8L765.6 251.7L769.8 257.8L773.3 264.3L775.2 271.7L777.4 278.9Z" stroke-dasharray="2 0.6 1.8 1.5" stroke-dashoffset="2.9" stroke-width="1.5" opacity="1"/><path d="M778.5 286.5L778.7 294L776.9 301.3L774.1 308.1L771.2 314.8L767.9 321.5L763.2 327L757.9 331.9L752.4 336.7L745.6 338.9L739.3 342.1L732.4 343.7L725.3 343.9L718.2 344.2L711.3 342.6L705 339.1L698.6 336L692.7 332L687.6 326.8L683.5 320.9L679.1 315.1L676.6 308.1L674.6 301.1L672.2 294L671.7 286.5L672.4 279L673.5 271.6L675 264.2L678.4 257.5L682.9 251.6L687 245.5L692.7 241.1L698.8 237.3L704.9 233.8L711.5 231.2L718.3 229.6L725.3 229.5L732.3 230L739 231.7L745.4 234.6L752 237.1L757.6 241.5L763.8 245.3L767.8 251.6L772 257.7L775.3 264.4L776.6 271.8L778.8 279Z" stroke-dasharray="3.6 1 2.3 1.6" stroke-dashoffset="2.6" stroke-width="1.5" opacity="1"/><path d="M779.7 286.5L779 293.9L777.5 301.2L775.9 308.5L773.1 315.5L768.3 321.1L764.2 327.1L759.2 332.4L753.9 337.5L747.7 341.3L740.9 343.9L733.9 345.3L726.8 346.1L719.7 345.2L712.6 344.7L706 341.7L699.5 338.7L693.1 335.5L687.9 330.2L682.9 324.9L679.1 318.5L676 311.8L673 305L671 297.7L670.6 290.2L669.4 282.7L670 275L672.9 268L675.4 260.9L678 253.7L682.4 247.7L688 242.9L693.2 237.7L699.6 234.5L705.8 230.5L712.7 229L719.7 228L726.8 228.5L733.7 228.8L740.6 230.3L747.2 233L753.3 236.6L759.1 240.7L765 245L770.1 250.5L773.9 257L776.7 264.1L779.2 271.3L779.4 279Z" stroke-dasharray="1.7 1.1 1.8 2.1" stroke-dashoffset="1.7" stroke-width="1.5" opacity="1"/><path d="M781.6 286.5L781.6 294L781 301.6L777.4 308.3L775.7 315.8L771 321.6L766.8 327.6L761.6 332.6L755.6 336.5L750.3 341.5L743.3 343.1L736.9 346.3L730 347.7L722.9 347.3L715.8 347.7L709.2 344.7L702.6 342.4L696 339.7L690.5 335L684.3 331L680 325L675.6 319L673.2 311.9L671.2 304.7L668.2 297.8L668.6 290.2L668.3 282.8L669.7 275.5L670.5 268.1L673.1 261.1L676.7 254.7L680.8 248.7L685 242.7L689.8 237.1L696.3 233.8L702.5 230.3L708.9 227.2L715.9 225.6L722.9 224.7L730 225.4L737 226.4L743.4 229.8L750.3 231.5L755.5 236.7L761.1 241L766.1 246.1L771.4 251.1L774.9 257.7L778.6 264.1L781 271.3L782.4 278.9Z" stroke-dasharray="3.3 0.6 1.2 1.9" stroke-dashoffset="4.9" stroke-width="1.5" opacity="1"/><path d="M782.3 286.5L781.7 293.8L781.5 301.3L779.5 308.4L777 315.4L773.3 321.7L768.3 327L764.3 333.2L759.2 338.5L753 342.1L746.6 345.2L739.9 347.3L733 348.5L726.1 350.2L719 350.5L712.3 347.7L705.3 346.9L698.8 344L693.2 339.4L687.1 335.7L682.8 329.6L678.2 324.2L673.9 318.4L670.2 312L668.2 304.9L667.2 297.5L664.8 290.3L665.2 282.7L665.6 275.2L668.1 268.1L670.3 261L673.9 254.6L677.7 248.4L682 242.5L687.3 237.6L692.8 233L698.9 229.3L705.7 227.5L712.2 224.5L719.2 223.9L726.1 224.2L732.9 225.1L740.1 225.1L746.6 227.9L752.5 232L759.1 234.8L764.2 239.9L769.2 245.2L774 250.7L776.7 257.8L779.5 264.6L781.9 271.6L783.6 279Z" stroke-dasharray="2.4 1.5 2.5 1.1" stroke-dashoffset="0.7" stroke-width="1.5" opacity="1"/><path d="M784.9 286.5L784.1 294L782.4 301.3L780.7 308.6L777.6 315.3L774.5 322L770.4 328.1L765.3 333.2L760.2 338.4L754.4 342.8L748.2 346.4L741.6 349.4L734.8 351.5L727.6 351.3L720.5 351.8L713.5 350.3L706.8 348.2L700.3 345.4L693.4 343.3L687.6 339L682.3 333.9L678.3 327.6L674.2 321.6L670.7 315.2L667.4 308.6L665 301.5L664.4 294L663.1 286.5L663 278.9L663.9 271.2L667.1 264.3L670.2 257.6L672.6 250.3L677.6 244.8L682.6 239.5L688.3 235.1L694.1 230.9L700.3 227.6L706.9 225.1L713.7 223.5L720.5 222L727.6 221.3L734.5 223L741.4 224.4L748.2 226.7L754.9 229.3L760.9 233.6L766.7 238.2L770.5 244.8L775.6 250.2L778.3 257.4L781.4 264.2L783.2 271.5L784.4 279Z" stroke-dasharray="3.6 1.2 1.4 1.7" stroke-dashoffset="2.6" stroke-width="1.5" opacity="1"/><path d="M785.7 286.5L786.5 294.1L784.6 301.4L782.5 308.5L780 315.5L775.8 321.5L771.9 327.6L768.1 334L762.9 339L757.4 343.9L750.8 346.7L744.8 350.8L737.9 352.9L730.8 353.5L723.7 354.8L716.8 352.9L709.9 351.4L702.8 350.7L696.8 346.4L690.4 343.3L684.5 339.2L679.4 333.9L675.5 327.7L670.7 322.2L668.5 314.9L665 308.5L662.3 301.5L661.7 294L661.6 286.5L660.6 278.9L662.1 271.4L663.8 264.1L666.3 256.9L669.7 250.1L674.3 244.3L678.8 238.4L684.5 233.9L690.6 230L696.8 226.5L703.3 223.9L710.1 222.4L716.8 220.1L723.7 220.2L730.8 219.6L737.4 222.5L744.5 223.1L750.6 226.9L756.8 230.1L762.6 234.4L768.8 238.3L773.2 244.3L777.1 250.6L780 257.5L782.4 264.5L784.9 271.6L787.1 278.9Z" stroke-dasharray="1.7 0.6 2.9 2" stroke-dashoffset="3.6" stroke-width="1.5" opacity="1"/><path d="M761 286.5L760.2 294L757.8 301.1L754 307.4L749 312.8L742.9 316.8L736.1 319.3L729 320.1L721.9 319.3L715.1 316.8L709 312.8L704 307.4L700.2 301.1L697.8 294L697 286.5L697.8 279L700.2 271.9L704 265.6L709 260.2L715.1 256.2L721.9 253.7L729 252.9L736.1 253.7L742.9 256.2L749 260.2L754 265.6L757.8 271.9L760.2 279Z" stroke-dasharray="7 2.5 4 3" stroke-dashoffset="0.1" stroke-width="1.2" opacity="1" stroke="#fff"/><path d="M787 286.5L786.9 294L787 301.6L784.6 308.7L784.4 316.9L782.5 324.7L778.5 331.4L771.6 335.3L768 342.5L762.3 347.3L756.1 351.2L749.2 353.4L742.3 354.9L736 359.2L728.8 360L721.7 359.1L714.8 357.6L708.5 354L701.7 352.9L695.4 350L689.3 346.6L683.6 342.4L677 339.1L671.9 333.6L669.1 326.2L662.8 321.2L663 312.5L657.1 306.4L657.1 298.3L656.3 290.4L657.9 282.7L657.4 274.8L658.5 267L663.5 260.7L666.8 254.1L668.3 246.2L674.2 241.5L679.2 236.5L683.3 230.2L689.5 226.8L695.3 222.8L701.5 219.3L708.2 217.6L714.5 212.7L721.7 212.9L728.9 212.5L735.8 215L743.2 214.8L750.2 216.9L756.8 220.4L760.6 228.3L766.6 232.4L770.7 238.6L776 243.6L780.3 249.7L783.2 256.7L784.7 264.2L788.9 271L788.8 278.8Z" stroke-dasharray="1.7 3.8 2.2 5.1" stroke-dashoffset="8" stroke-width="1.5" opacity="1"/><path d="M789.8 286.5L790.9 294.2L787.8 301.3L787.3 309L785.6 316.5L782.2 323.2L777.5 329L773.6 335.3L769.5 341.6L765 347.8L758.7 351.6L752.1 354.5L745.8 358L739 360.1L731.9 360.6L725 363L717.9 362L711 360L704.7 356.5L696.9 357.5L692.2 350.5L686.3 346.7L680.5 342.8L674 339.2L668.8 333.9L665.1 327.1L663.4 319.4L657.9 313.6L658.7 305.2L656.6 297.9L655.7 290.3L653.6 282.6L654.1 274.7L655.5 266.9L656.5 258.8L660.3 251.9L664.1 245.2L670.4 240.5L673 232.7L678.5 227.5L684.6 223.4L692.2 222.5L697.4 216.8L704.3 215.2L711.1 213.2L718 213.3L725 210.6L732.1 210.7L739.2 211.9L745.5 215.8L752.9 216.7L758 222.7L765.3 224.7L769.1 231.9L773.8 237.5L778.4 243.3L783.9 248.7L788.1 255.3L788.3 263.6L790.5 271L791.1 278.8Z" stroke-dasharray="2.2 3.6 1 4.1" stroke-dashoffset="6.7" stroke-width="1.5" opacity="1"/><path d="M792.3 286.5L794.2 294.4L793.9 302.3L789.6 309.1L787.6 316.5L785.6 324.1L783.5 332L779.2 338.5L774.7 344.9L767.1 347.6L762.1 353.3L756.2 358.1L748.7 358.9L742.2 362L734.9 361.7L728.2 365.3L721.1 363.3L714.2 362.8L707.2 362.2L700.8 358.7L693.5 358.1L687.8 353.3L681.8 349.3L675.3 345.8L670.1 340.3L665.1 334.6L660.3 328.6L656.9 321.5L655.5 313.5L652.5 306.2L650.2 298.6L653.1 290.3L650.8 282.5L652.3 274.8L654.5 267.4L658 260.5L660.3 253.4L662.1 245.7L665.8 238.9L670.1 232.6L675.9 227.9L681 222.4L687 218.2L694.4 217.1L700 211.7L706.7 208.4L713.8 207.3L721.1 208.6L728.3 206.6L735.3 209L742.3 210.5L749.5 211.8L756 215.5L760.8 221.8L767.7 224.7L771.1 232.1L776 237.5L782.1 242.1L786 248.7L786.4 257L790.8 263.5L790.1 271.5L792.6 278.8Z" stroke-dasharray="3.4 4 1.4 2.3" stroke-dashoffset="2.8" stroke-width="1.5" opacity="1"/><path d="M795.8 286.5L794.4 294L794.5 301.7L793.2 309.3L793.1 317.6L790.5 325L784 329.9L780.7 336.8L776 342.5L770.6 347.5L766.1 353.8L760 357.8L751.9 357.1L746.1 361.4L739.7 364L733 366.1L726 366.3L719 368L712.4 364L705.3 364.6L698 364.5L692.5 359L686.2 355.8L679.1 353.6L674.8 347.2L668.4 343.3L665.2 336.1L661.1 330L657.2 323.6L652.7 317.3L651.3 309.5L650 301.9L649.2 294.2L650.2 286.5L648.2 278.7L651 271.3L652.6 263.9L657.1 257.7L659.1 250.5L661.1 243L663.6 235.5L668.9 230.2L675.7 227L678.9 219.1L686.1 217.1L691.5 211.7L698.6 210.4L705.4 208.8L711.8 204L719 204.7L726.1 204.4L733.2 204.9L740 207.2L746.5 210.6L752.6 214.1L759 217L764 222.4L769.3 227.1L776 230.5L778.9 237.7L784.4 242.8L787.9 249.4L790.2 256.7L794.1 263.4L794.1 271.3L793.9 279Z" stroke-dasharray="1.4 3.1 1.7 5.4" stroke-dashoffset="6.8" stroke-width="1.5" opacity="1"/><path d="M799.3 286.5L799.8 294.4L795.9 301.6L796.1 309.6L794.4 317.3L788.5 322.8L784.1 328.6L780.8 335.1L778.1 342.5L771.9 346.4L768.8 354.3L761 355.3L756.8 362.8L749.5 363.8L743.7 369.3L736.2 368.5L729.2 368.7L722.2 372.1L715.2 370L707.7 372.1L700.8 369.6L694.9 364.3L688.1 362L681.9 358.2L675.6 354.4L671.9 347.2L666.2 342.7L662.1 336.4L658.1 330.2L655 323.4L652.7 316.1L650.7 308.9L649 301.6L645.1 294.4L646.7 286.5L648.6 279L647.9 271.2L647.6 263.1L650 255.7L655.1 249.7L657.1 242.1L660.9 235.5L664.1 228.2L671.1 224.8L674.8 217.4L681.2 213.5L689.2 213.5L694.8 208.6L701.5 206.3L708.3 204.3L715.2 202.2L722.2 205.5L729.3 202.8L735.6 208L743.2 205.6L749 210.6L754.9 214.5L762.8 214.5L769.3 218L774.1 224L779.7 228.9L783.1 235.9L786.7 242.6L791.9 248.3L795.5 255.3L795.4 263.6L797.4 271.1L797.7 278.8Z" stroke-dasharray="2.9 3.8 2.4 3.6" stroke-dashoffset="2.1" stroke-width="1.5" opacity="1"/><path d="M799.6 286.5L800.3 294.3L799.2 301.9L798.8 309.8L795.5 316.9L790.6 322.9L788 329.9L785.6 337.4L780.3 342.6L776.3 349L770.9 354.1L767.1 361.7L760.7 365.7L753.5 367.7L746.3 369.1L739.4 370.8L732.2 370.1L725.4 372.4L718.5 370.5L711.5 371.5L704.3 371.3L698.2 367L691.2 365.7L684.6 362.8L678.2 359.4L673.8 352.9L669 347.4L661.8 344.3L658.5 337.2L655.3 330.3L650 324.6L646.1 317.8L643.1 310.4L644.2 302L643.7 294.2L643.5 286.5L643.7 278.8L645.2 271.2L643.8 262.8L647.5 255.8L653.1 250L656.5 243.5L660.1 237.1L661.8 228.7L668.9 225.5L672.8 218.7L680.1 216.7L686 212.9L690.7 206L698.5 207.3L704.6 202.9L711.4 201L718.4 201L725.5 198.5L732.8 198.4L739.3 202.7L746.2 204.2L753.2 206L759.6 209.4L766.1 212.9L772.3 217.1L776.1 224.1L782.9 227.9L785.4 235.8L787.2 243.6L791.9 249.4L794.8 256.4L795.2 264.3L799.8 270.9L799.4 278.8Z" stroke-dasharray="3.2 2 0.8 2.7" stroke-dashoffset="4.2" stroke-width="1.5" opacity="1"/><path d="M802.4 286.5L798.9 293.9L801.5 302L799.7 309.5L797.6 316.9L794.4 323.8L792.8 331.7L789.7 338.9L784.1 344.1L779 349.6L774.3 355.5L769.5 361.7L763.1 365.5L756.9 369.8L749.4 370.5L743 374.3L735.6 373.9L728.8 376.5L721.6 373.6L714.5 375.7L707.4 375.3L700.3 374.2L694.2 369.4L687 368.1L682.4 361.2L677.2 356.3L670.2 354L665.7 348L660.7 342.7L655.5 337.4L650.8 331.5L646.8 324.9L646.2 316.7L642.6 309.8L640.5 302.2L639.1 294.4L639.1 286.5L639.9 278.6L639.2 270.5L644.5 263.8L643.3 255.1L649 249.2L652.4 242.5L654.4 234.7L659.8 229.5L665.2 224.4L671.3 220.6L677 216.3L682.2 211.5L688.7 208.9L694 203L701.3 203.2L707.8 200.5L714.7 199L721.6 196.9L728.8 196.3L735.8 197.9L742.3 201.4L749 203.9L756.4 204.5L762.4 208.9L769.4 211.4L773.6 218.4L780.4 221.9L783.9 229L787.7 235.6L790.9 242.5L796.3 248.2L797.6 256.1L799.7 263.5L802.3 270.9L799.1 279Z" stroke-dasharray="1.9 2.3 1.3 4.6" stroke-dashoffset="4.4" stroke-width="1.5" opacity="1"/><path d="M709.5 347A58 62.6 0 0 1 704.7 227.6" stroke="#fff" stroke-width="3.6" stroke-dasharray="45 2 30 3"/><path d="M677.5 344.4A70 75.6 0 0 1 677.5 228.6" stroke="#fff" stroke-width="2.8" stroke-dasharray="45 2 30 3"/><path d="M734.6 235.4A48 51.8 0 0 1 750.2 331.4" stroke="#fff" stroke-width="2" stroke-dasharray="45 2 30 3"/></g><path d="M303 168v8M303 405.8v-8M263.4 207.6h8M501.2 207.6h-8M342.7 168v8M342.7 405.8v-8M263.4 247.3h8M501.2 247.3h-8M382.3 168v8M382.3 405.8v-8M263.4 286.9h8M501.2 286.9h-8M421.9 168v8M421.9 405.8v-8M263.4 326.5h8M501.2 326.5h-8M461.6 168v8M461.6 405.8v-8M263.4 366.2h8M501.2 366.2h-8" stroke="#222" stroke-width="1.4" fill="none"/><rect x="263.4" y="168" width="237.8" height="237.8" stroke="#222" stroke-width="1.4" fill="none"/><g font-family="Liberation Sans" font-size="17.5" fill="#111"><text x="252.4" y="174" text-anchor="end">1.5</text><text x="252.4" y="213.6" text-anchor="end">1.0</text><text x="252.4" y="253.3" text-anchor="end">0.5</text><text x="252.4" y="292.9" text-anchor="end">0.0</text><text x="252.4" y="332.5" text-anchor="end">-0.5</text><text x="252.4" y="372.2" text-anchor="end">-1.0</text><text x="252.4" y="411.8" text-anchor="end">-1.5</text><text x="265.4" y="429.8" text-anchor="middle">1.5</text><text x="305" y="429.8" text-anchor="middle">2.0</text><text x="344.7" y="429.8" text-anchor="middle">2.5</text><text x="384.3" y="429.8" text-anchor="middle">3.0</text><text x="423.9" y="429.8" text-anchor="middle">3.5</text><text x="463.6" y="429.8" text-anchor="middle">4.0</text><text x="503.2" y="429.8" text-anchor="middle">4.5</text><text x="382.3" y="456.3" text-anchor="middle">R [m]</text><text transform="translate(201.4 286.9) rotate(-90)" text-anchor="middle">Z [m]</text></g><path d="M658.1 168v8M658.1 405.8v-8M618.5 207.6h8M856.3 207.6h-8M697.8 168v8M697.8 405.8v-8M618.5 247.3h8M856.3 247.3h-8M737.4 168v8M737.4 405.8v-8M618.5 286.9h8M856.3 286.9h-8M777 168v8M777 405.8v-8M618.5 326.5h8M856.3 326.5h-8M816.7 168v8M816.7 405.8v-8M618.5 366.2h8M856.3 366.2h-8" stroke="#222" stroke-width="1.4" fill="none"/><rect x="618.5" y="168" width="237.8" height="237.8" stroke="#222" stroke-width="1.4" fill="none"/><g font-family="Liberation Sans" font-size="17.5" fill="#111"><text x="607.5" y="174" text-anchor="end">1.5</text><text x="607.5" y="213.6" text-anchor="end">1.0</text><text x="607.5" y="253.3" text-anchor="end">0.5</text><text x="607.5" y="292.9" text-anchor="end">0.0</text><text x="607.5" y="332.5" text-anchor="end">-0.5</text><text x="607.5" y="372.2" text-anchor="end">-1.0</text><text x="607.5" y="411.8" text-anchor="end">-1.5</text><text x="620.5" y="429.8" text-anchor="middle">1.5</text><text x="660.1" y="429.8" text-anchor="middle">2.0</text><text x="699.8" y="429.8" text-anchor="middle">2.5</text><text x="739.4" y="429.8" text-anchor="middle">3.0</text><text x="779" y="429.8" text-anchor="middle">3.5</text><text x="818.7" y="429.8" text-anchor="middle">4.0</text><text x="858.3" y="429.8" text-anchor="middle">4.5</text><text x="737.4" y="456.3" text-anchor="middle">R [m]</text><text transform="translate(556.5 286.9) rotate(-90)" text-anchor="middle">Z [m]</text></g></svg>
    <svg class="a" style="left:0;top:0" width="1060" height="599"><path d="M529.5 0V95" stroke="#7aa0d0" stroke-width="1" stroke-dasharray="1.5 2" opacity=".9"/><path d="M529.5 95V599M0 300.5H1060" stroke="#c4c4c4" stroke-width="1" stroke-dasharray="1.5 2"/><text x="5.5" y="55.5" textLength="562" lengthAdjust="spacingAndGlyphs" font-size="30" fill="#fff" font-weight="normal" font-family="Liberation Sans" >Impact of plasma rotation on 3D MHD equilibrium</text><text x="332.8" y="129.8" textLength="389.2" lengthAdjust="spacingAndGlyphs" font-size="27" fill="#0b1f5e" font-weight="bold" font-family="Liberation Sans" >An example of improved HINT</text><text x="311" y="152.3" textLength="77" lengthAdjust="spacingAndGlyphs" font-size="17.5" fill="#333" font-weight="normal" font-family="Liberation Serif" >(a) M = 0</text><text x="659" y="152.3" textLength="90.2" lengthAdjust="spacingAndGlyphs" font-size="17.5" fill="#333" font-weight="normal" font-family="Liberation Serif" >(b) M = 0.1</text><circle cx="334" cy="478" r="2.6" fill="#000"/><circle cx="334" cy="504.5" r="2.6" fill="#000"/><text x="355.3" y="485" textLength="370.2" lengthAdjust="spacingAndGlyphs" font-size="21.5" fill="#000" font-weight="bold" font-family="Liberation Sans" >Rigid toroidal rotation is assumed.</text><text x="355.3" y="511.5" textLength="351.5" lengthAdjust="spacingAndGlyphs" font-size="21.5" fill="#000" font-weight="bold" font-family="Liberation Sans" >Phases of island slips poloidally.</text><text x="682.8" y="548.8" textLength="333.8" lengthAdjust="spacingAndGlyphs" font-size="11.5" fill="#333" font-weight="normal" font-family="Liberation Sans" >Yasuhiro Suzuki, Plasma Phys. Control. Fusion <tspan font-weight="bold">59</tspan>, 054008 (2017).</text><text x="357.3" y="574.3" textLength="402.2" lengthAdjust="spacingAndGlyphs" font-size="13.5" fill="#888" font-weight="bold" font-family="Liberation Sans" >Stochasticity in Fusion Plasma, Hosted by HUST, July 12, 2021</text><text x="1019.9" y="575" textLength="15.3" lengthAdjust="spacingAndGlyphs" font-size="13.5" fill="#888" font-weight="normal" font-family="Liberation Sans" >19</text></svg>
    <svg class="a" style="left:0;top:552px" width="180" height="47" viewBox="0 0 180 47">
      <ellipse cx="25" cy="26.5" rx="25" ry="19.5" transform="rotate(-12 25 26.5)" fill="#2352a8"/>
      <g fill="none" stroke="#fff">
        <ellipse cx="24" cy="28" rx="15.5" ry="10.5" transform="rotate(-15 24 28)" stroke-width="2.4"/>
        <path d="M1 33Q3 21 15 15" stroke-width="2.2"/><path d="M29 7Q45 8 49 21" stroke-width="2.2"/><path d="M47 34Q41 44 26 46" stroke-width="2.2"/><path d="M6 42Q14 46 24 46" stroke-width="1.5"/>
      </g>
      <text x="14" y="32" font-family="Liberation Sans" font-style="italic" font-weight="bold" font-size="9" fill="#fff" textLength="19" lengthAdjust="spacingAndGlyphs">nifs</text>
      <g font-family="Liberation Sans" font-weight="bold" font-size="10" fill="#111">
        <text x="57.5" y="24.5">S</text><text x="72" y="25">O</text><text x="87" y="31">K</text><text x="102.5" y="30.5">E</text><text x="117" y="22.6">N</text><text x="132" y="22.6">D</text><text x="146.5" y="15.4">A</text><text x="163" y="15.4">I</text>
      </g>
      <path d="M60.4 33.6L76 33.6L91 39L105 38L119.5 31.7L135 32.3L150 24.5L165 24.8" fill="none" stroke="#111" stroke-width="1.4"/>
    </svg>
  </div>
</div>
<div id="side">
  <!-- separator -->
  <div class="a" style="left:5px;top:446px;width:2px;height:36px;background:#8a8a8a"></div>
  <div class="a" style="left:9px;top:446px;width:2px;height:36px;background:#8a8a8a"></div>
  <!-- tile 1 -->
  <div class="tile" style="top:2px;height:124px;background:#e2e1de">
    <div class="vid">
      <div class="a" style="left:0;top:0;width:222px;height:124px;background:linear-gradient(90deg,#d6d4d0 0%,#dcdad7 35%,#e6e6e4 70%,#ecebea 100%)"></div>
      <div class="a" style="left:0;top:22px;width:176px;height:4px;background:#b8b6b2"></div>
      <div class="a" style="left:0;top:26px;width:69px;height:72px;background:#d9d7d2"></div>
      <div class="a" style="left:3px;top:30px;width:60px;height:14px;background:repeating-linear-gradient(180deg,#bdbbb7 0 1px,#d9d7d2 1px 3px)"></div>
      <div class="a" style="left:43px;top:28px;width:22px;height:5px;background:#2a3a70"></div>
      <div class="a" style="left:0;top:50px;width:22px;height:3px;background:#2c3c4c"></div>
      <div class="a" style="left:24px;top:50px;width:42px;height:5px;background:#3e5868"></div>
      <div class="a" style="left:26px;top:58px;width:18px;height:10px;border-radius:50%;background:#7a6050"></div>
      <div class="a" style="left:3px;top:60px;width:18px;height:16px;background:repeating-linear-gradient(180deg,#bdbbb7 0 1px,#d9d7d2 1px 3px)"></div>
      <div class="a" style="left:7px;top:72px;width:14px;height:8px;border-radius:50%;background:#a05848"></div>
      <div class="a" style="left:28px;top:78px;width:32px;height:7px;background:#6a5a68"></div>
      <div class="a" style="left:0;top:93px;width:20px;height:3px;background:#2a3a4a"></div>
      <div class="a" style="left:24px;top:92px;width:38px;height:3px;background:#48687a"></div>
      <!-- shirt -->
      <div class="a" style="left:76px;top:84px;width:116px;height:44px;border-radius:36px 40px 0 0;background:linear-gradient(90deg,#5a78a6,#7090c0 45%,#6a8abc 80%,#5a7aae)"></div>
      <div class="a" style="left:112px;top:80px;width:40px;height:22px;background:#9ab0cc;clip-path:polygon(0 0,100% 0,75% 100%,25% 100%)"></div>
      <div class="a" style="left:108px;top:66px;width:32px;height:24px;background:#977260;border-radius:0 0 14px 14px"></div>
      <div class="a" style="left:98px;top:24px;width:46px;height:62px;border-radius:45% 45% 48% 48%;background:linear-gradient(180deg,#bc9a84,#a88068)"></div>
      <div class="a" style="left:93px;top:40px;width:7px;height:14px;border-radius:50%;background:#a88068"></div>
      <div class="a" style="left:141px;top:40px;width:7px;height:14px;border-radius:50%;background:#a07a64"></div>
      <div class="a" style="left:96px;top:13px;width:51px;height:22px;border-radius:50% 50% 30% 40%;background:#222020"></div>
      <div class="a" style="left:96px;top:26px;width:6px;height:16px;background:#222020;border-radius:0 0 0 4px"></div>
      <div class="a" style="left:141px;top:24px;width:6px;height:22px;background:#222020;border-radius:0 0 4px 0"></div>
      <div class="a" style="left:100px;top:44px;width:20px;height:9px;border:1.2px solid #4a3a36;border-radius:4px"></div>
      <div class="a" style="left:123px;top:44px;width:20px;height:9px;border:1.2px solid #4a3a36;border-radius:4px"></div>
    </div>
    <div class="nm" style="width:117px"></div><svg class="a" style="left:0;top:0;overflow:visible" width="222" height="125"><text x="6.0" y="117.9" textLength="105.5" lengthAdjust="spacingAndGlyphs" font-family="Liberation Sans" font-size="17.5" fill="#f2f2f2">yunfeng liang</text></svg>
    <svg class="a" style="left:13px;top:10px" width="26" height="32" viewBox="0 0 26 32"><g fill="#fcc63a"><rect x="0.5" y="6" width="5.2" height="17" rx="2.6"/><rect x="5" y="2.2" width="5.2" height="19" rx="2.6"/><rect x="9.6" y="0.6" width="5.2" height="19" rx="2.6"/><rect x="14" y="2.6" width="5.2" height="17" rx="2.6"/><path d="M0.5 13L19.2 13L19.2 20Q21.5 16.8 24 16.6Q26.2 16.8 25.3 19Q22 24 19 28Q16 32 10 32Q0.5 32 0.5 22Z"/></g><path d="M5.3 8v9M9.9 4v11M14.4 5v10" stroke="#e0a020" stroke-width=".6"/><g fill="#fff" opacity=".6"><circle cx="3" cy="8.2" r="1"/><circle cx="7.6" cy="4.4" r="1"/><circle cx="12.2" cy="2.8" r="1"/><circle cx="16.6" cy="4.8" r="1"/><circle cx="23.5" cy="18.3" r="1"/></g></svg>
  </div>
  <!-- tile 2 -->
  <div class="tile" style="top:135px;height:125px;background:#232323">
    <svg class="a" style="left:13px;top:11px" width="26" height="32" viewBox="0 0 26 32"><g fill="#fcc63a"><rect x="0.5" y="6" width="5.2" height="17" rx="2.6"/><rect x="5" y="2.2" width="5.2" height="19" rx="2.6"/><rect x="9.6" y="0.6" width="5.2" height="19" rx="2.6"/><rect x="14" y="2.6" width="5.2" height="17" rx="2.6"/><path d="M0.5 13L19.2 13L19.2 20Q21.5 16.8 24 16.6Q26.2 16.8 25.3 19Q22 24 19 28Q16 32 10 32Q0.5 32 0.5 22Z"/></g><path d="M5.3 8v9M9.9 4v11M14.4 5v10" stroke="#e0a020" stroke-width=".6"/><g fill="#fff" opacity=".6"><circle cx="3" cy="8.2" r="1"/><circle cx="7.6" cy="4.4" r="1"/><circle cx="12.2" cy="2.8" r="1"/><circle cx="16.6" cy="4.8" r="1"/><circle cx="23.5" cy="18.3" r="1"/></g></svg>
    <svg class="a" style="left:0;top:0" width="222" height="90"><text x="11" y="71.5" textLength="202" lengthAdjust="spacingAndGlyphs" font-family="Liberation Sans" font-weight="bold" font-size="23" fill="#f2f2f2">Alexander Knieps</text></svg>
    <div class="mute" style="left:0;top:97px"><svg class="a" style="left:0px;top:0px" width="26" height="27" viewBox="0 0 26 27"><g fill="#f05a5a"><path d="M10.5 9.5Q10.5 5 14.2 5Q18 5 18 9.5L18 16Q18 20.5 14.2 20.5Q10.5 20.5 10.5 16Z"/><rect x="13" y="19" width="2.5" height="3"/><rect x="10.5" y="21.5" width="7.5" height="2"/></g><path d="M5.5 23.5L24 5.5" stroke="#2d2d2d" stroke-width="3.2"/><path d="M5.5 23.5L24 5.5" stroke="#f05a5a" stroke-width="1.6" stroke-linecap="round"/></svg></div>
  </div>
  <!-- tile 3 -->
  <div class="tile" style="top:268px;height:125px;background:#6c3c25">
    <div class="vid">
      <div class="a" style="left:0;top:0;width:131px;height:49px;background:linear-gradient(180deg,#bab291,#aaa181)"></div>
      <div class="a" style="left:0;top:48px;width:131px;height:4px;background:#5a2f1c"></div>
      <div class="a" style="left:0;top:52px;width:131px;height:73px;background:linear-gradient(180deg,#6e3e26,#643822)"></div>
      <div class="a" style="left:3px;top:58px;width:10px;height:28px;border:1px solid #4f2a18"></div>
      <div class="a" style="left:21px;top:63px;width:49px;height:23px;background:#5c301d;border:1px solid #4a2716"></div>
      <div class="a" style="left:88px;top:63px;width:40px;height:23px;background:#5c301d;border:1px solid #4a2716"></div>
      <div class="a" style="left:131px;top:0;width:91px;height:91px;background:#2a2622"></div>
      <div class="a" style="left:134px;top:0;width:88px;height:86px;background:#c9c6b2"></div>
      <div class="a" style="left:135px;top:1px;width:33px;height:54px;background:#a8bcc2"></div>
      <div class="a" style="left:138px;top:5px;width:23px;height:14px;background:#e0f0f6"></div>
      <div class="a" style="left:138px;top:23px;width:23px;height:13px;background:#e0f0f6"></div>
      <div class="a" style="left:138px;top:40px;width:23px;height:13px;background:#e0f0f6"></div>
      <div class="a" style="left:168px;top:1px;width:13px;height:54px;background:#a2a49c"></div>
      <div class="a" style="left:181px;top:1px;width:41px;height:53px;background:#e6f6f8"></div>
      <div class="a" style="left:136px;top:80px;width:86px;height:7px;background:#dce6ee"></div>
      <div class="a" style="left:130px;top:91px;width:92px;height:3px;background:#b0a090"></div>
      <div class="a" style="left:130px;top:94px;width:92px;height:31px;background:#6a3a24"></div>
      <div class="a" style="left:137px;top:100px;width:35px;height:25px;border:1px solid #4e2a18"></div>
      <div class="a" style="left:177px;top:100px;width:40px;height:25px;border:1px solid #4e2a18"></div>
      <!-- person -->
      <div class="a" style="left:58px;top:73px;width:42px;height:20px;border-radius:10px 10px 0 0;background:#e4a28c"></div>
      <div class="a" style="left:72px;top:74px;width:14px;height:16px;background:#dce0e8"></div>
      <div class="a" style="left:76px;top:80px;width:6px;height:6px;background:#30305a"></div>
      <div class="a" style="left:70px;top:51px;width:18px;height:23px;border-radius:45%;background:#c49a86"></div>
      <div class="a" style="left:68px;top:48px;width:22px;height:11px;border-radius:50% 50% 10% 10%;background:#262020"></div>
      <div class="a" style="left:48px;top:86px;width:53px;height:10px;background:#1e1a1a"></div>
      <div class="a" style="left:29px;top:94px;width:94px;height:6px;background:#8e5030"></div>
    </div>
    <div class="nm" style="width:156px;height:28px"></div><svg class="a" style="left:0;top:0;overflow:visible" width="222" height="125"><text x="7.6" y="118.1" textLength="139.9" lengthAdjust="spacingAndGlyphs" font-family="Liberation Sans" font-size="17.5" fill="#f2f2f2">10th SFP Worksh...</text></svg>
  </div>
  <!-- tile 4 -->
  <div class="tile" style="top:401px;height:125px;background:#e8e8ea">
    <div class="vid">
      <div class="a" style="left:0;top:0;width:222px;height:60px;background:linear-gradient(180deg,#dcdcde,#eeeeef 35%,#e2e2e4)"></div>
      <div class="a" style="left:55px;top:2px;width:70px;height:22px;border-radius:50%;background:#fafafa"></div>
      <div class="a" style="left:150px;top:1px;width:72px;height:14px;border-radius:50%;background:#f6f6f6"></div>
      <div class="a" style="left:110px;top:30px;width:60px;height:14px;border-radius:50%;background:#f4f4f4"></div>
      <div class="a" style="left:0;top:21px;width:46px;height:43px;background:#d8d4c6"></div>
      <div class="a" style="left:0;top:19px;width:46px;height:3px;background:#8a5a48"></div>
      <div class="a" style="left:34px;top:33px;width:8px;height:8px;border-radius:50%;border:1.5px solid #6a4a3a;background:#e8e0d0"></div>
      <div class="a" style="left:0;top:64px;width:48px;height:36px;background:#6a3a2a"></div>
      <div class="a" style="left:46px;top:17px;width:60px;height:22px;background:#7e5c3c;clip-path:polygon(0 0,100% 70%,100% 100%,70% 100%,0 55%)"></div>
      <div class="a" style="left:45px;top:30px;width:8px;height:58px;background:#e6e4e0"></div>
      <div class="a" style="left:53px;top:36px;width:46px;height:48px;background:linear-gradient(90deg,#2a6878,#4a8c88 50%,#3a7a82)"></div>
      <div class="a" style="left:75px;top:16px;width:30px;height:20px;border-radius:50%;background:#f0eeea"></div>
      <div class="a" style="left:96px;top:38px;width:28px;height:17px;background:#34383c"></div>
      <div class="a" style="left:99px;top:55px;width:36px;height:30px;background:#e2e0dc"></div>
      <div class="a" style="left:135px;top:55px;width:87px;height:30px;background:#6c3c2e"></div>
      <div class="a" style="left:155px;top:58px;width:34px;height:12px;background:linear-gradient(90deg,#6a8a60,#b0a050,#5a8a70)"></div>
      <div class="a" style="left:186px;top:36px;width:36px;height:18px;background:#3a3e42"></div>
      <div class="a" style="left:186px;top:12px;width:36px;height:24px;border-radius:50%;background:#d8d2c8"></div>
      <div class="a" style="left:20px;top:76px;width:202px;height:18px;background:linear-gradient(90deg,#6a6468,#8a8a94 40%,#a4a4aa 70%,#8a8a90)"></div>
      <div class="a" style="left:22px;top:80px;width:10px;height:14px;background:#6a7080;border-radius:3px 3px 0 0"></div><div class="a" style="left:23px;top:77px;width:8px;height:6px;background:#2a2420;border-radius:50%"></div><div class="a" style="left:33px;top:78px;width:9px;height:14px;background:#c8ccd4;border-radius:3px 3px 0 0"></div><div class="a" style="left:34px;top:74px;width:7px;height:6px;background:#2a2420;border-radius:50%"></div><div class="a" style="left:43px;top:79px;width:8px;height:14px;background:#b0b8c4;border-radius:3px 3px 0 0"></div><div class="a" style="left:44px;top:76px;width:6px;height:6px;background:#2a2420;border-radius:50%"></div><div class="a" style="left:56px;top:79px;width:6px;height:14px;background:#e0e0e4;border-radius:3px 3px 0 0"></div><div class="a" style="left:57px;top:73px;width:4px;height:6px;background:#2a2420;border-radius:50%"></div><div class="a" style="left:64px;top:79px;width:9px;height:14px;background:#6a7080;border-radius:3px 3px 0 0"></div><div class="a" style="left:65px;top:76px;width:7px;height:6px;background:#2a2420;border-radius:50%"></div><div class="a" style="left:75px;top:82px;width:6px;height:14px;background:#c8ccd4;border-radius:3px 3px 0 0"></div><div class="a" style="left:76px;top:77px;width:4px;height:6px;background:#2a2420;border-radius:50%"></div><div class="a" style="left:85px;top:78px;width:7px;height:14px;background:#c8ccd4;border-radius:3px 3px 0 0"></div><div class="a" style="left:86px;top:73px;width:5px;height:6px;background:#2a2420;border-radius:50%"></div><div class="a" style="left:94px;top:79px;width:7px;height:14px;background:#c8ccd4;border-radius:3px 3px 0 0"></div><div class="a" style="left:95px;top:75px;width:5px;height:6px;background:#2a2420;border-radius:50%"></div><div class="a" style="left:104px;top:79px;width:7px;height:14px;background:#e0e0e4;border-radius:3px 3px 0 0"></div><div class="a" style="left:105px;top:74px;width:5px;height:6px;background:#2a2420;border-radius:50%"></div><div class="a" style="left:113px;top:78px;width:9px;height:14px;background:#6a7080;border-radius:3px 3px 0 0"></div><div class="a" style="left:114px;top:75px;width:7px;height:6px;background:#2a2420;border-radius:50%"></div><div class="a" style="left:126px;top:80px;width:7px;height:14px;background:#c8ccd4;border-radius:3px 3px 0 0"></div><div class="a" style="left:127px;top:73px;width:5px;height:6px;background:#2a2420;border-radius:50%"></div><div class="a" style="left:136px;top:82px;width:8px;height:14px;background:#e0e0e4;border-radius:3px 3px 0 0"></div><div class="a" style="left:137px;top:73px;width:6px;height:6px;background:#2a2420;border-radius:50%"></div><div class="a" style="left:149px;top:80px;width:8px;height:14px;background:#8a96a8;border-radius:3px 3px 0 0"></div><div class="a" style="left:150px;top:75px;width:6px;height:6px;background:#2a2420;border-radius:50%"></div><div class="a" style="left:160px;top:80px;width:9px;height:14px;background:#7a8898;border-radius:3px 3px 0 0"></div><div class="a" style="left:161px;top:74px;width:7px;height:6px;background:#2a2420;border-radius:50%"></div><div class="a" style="left:173px;top:79px;width:9px;height:14px;background:#7a8898;border-radius:3px 3px 0 0"></div><div class="a" style="left:174px;top:73px;width:7px;height:6px;background:#2a2420;border-radius:50%"></div><div class="a" style="left:185px;top:80px;width:6px;height:14px;background:#7a8898;border-radius:3px 3px 0 0"></div><div class="a" style="left:186px;top:76px;width:4px;height:6px;background:#2a2420;border-radius:50%"></div><div class="a" style="left:192px;top:80px;width:10px;height:14px;background:#b0b8c4;border-radius:3px 3px 0 0"></div><div class="a" style="left:193px;top:76px;width:8px;height:6px;background:#2a2420;border-radius:50%"></div><div class="a" style="left:207px;top:78px;width:6px;height:14px;background:#b0b8c4;border-radius:3px 3px 0 0"></div><div class="a" style="left:208px;top:74px;width:4px;height:6px;background:#2a2420;border-radius:50%"></div>
      <div class="a" style="left:18px;top:90px;width:120px;height:7px;background:#8a5040"></div>
      <div class="a" style="left:0;top:90px;width:222px;height:35px;background:linear-gradient(180deg,#8a5848,#7a4a3a)"></div>
      <div class="a" style="left:98px;top:84px;width:28px;height:16px;border-radius:50%;background:#3e7c34"></div>
      <div class="a" style="left:122px;top:80px;width:25px;height:16px;border-radius:50%;background:#3a7a30"></div>
      <div class="a" style="left:140px;top:78px;width:26px;height:14px;border-radius:50%;background:#4a8a3a"></div>
      <div class="a" style="left:152px;top:92px;width:24px;height:33px;background:#d4d6d8"></div>
      <div class="a" style="left:176px;top:84px;width:26px;height:34px;background:#a8acae"></div>
      <div class="a" style="left:150px;top:115px;width:40px;height:10px;background:#6a6a5a"></div>
      <div class="a" style="left:202px;top:86px;width:20px;height:39px;background:#8a5a4a"></div>
    </div>
    <div class="nm" style="width:100px"><svg class="a" style="left:2px;top:0px" width="26" height="27" viewBox="0 0 26 27"><g fill="#f05a5a"><path d="M10.5 9.5Q10.5 5 14.2 5Q18 5 18 9.5L18 16Q18 20.5 14.2 20.5Q10.5 20.5 10.5 16Z"/><rect x="13" y="19" width="2.5" height="3"/><rect x="10.5" y="21.5" width="7.5" height="2"/></g><path d="M5.5 23.5L24 5.5" stroke="#3a3230" stroke-width="3.2"/><path d="M5.5 23.5L24 5.5" stroke="#f05a5a" stroke-width="1.6" stroke-linecap="round"/></svg></div><svg class="a" style="left:0;top:0;overflow:visible" width="222" height="125"><text x="31.6" y="118.9" textLength="63.1" lengthAdjust="spacingAndGlyphs" font-family="Liberation Sans" font-size="17.5" fill="#f2f2f2">Co-Host</text></svg>
  </div>
  <!-- tile 5 -->
  <div class="tile" style="top:535px;height:125px;background:#1e1714">
    <svg class="a" style="left:0;top:0" width="222" height="125">
      <text x="10" y="86" textLength="207" lengthAdjust="spacingAndGlyphs" font-family="Liberation Sans" font-weight="bold" font-size="83" fill="#e2dada">40:36</text>
      <text x="17.5" y="105" textLength="193" lengthAdjust="spacingAndGlyphs" font-family="Liberation Sans" font-weight="bold" font-size="12.5" fill="#dcd6d4">Speaker : *First + Family name</text>
    </svg>
    <div class="nm" style="width:107px;height:28px"></div><svg class="a" style="left:0;top:0;overflow:visible" width="222" height="125"><text x="6.8" y="117.4" textLength="94.2" lengthAdjust="spacingAndGlyphs" font-family="Liberation Sans" font-size="17.5" fill="#f2f2f2">Time Keeper</text></svg>
  </div>
  <!-- tile 6 -->
  <div class="a" style="left:20px;top:663px;width:228px;height:135px;background:linear-gradient(180deg,#dcea7a 0%,#b0de48 28%,#70cc18 48%,#a8dc50 62%,#e8f080 85%,#f4f48c 100%)"></div>
  <div class="a" style="left:20px;top:663px;width:228px;height:5px;background:#d8e676"></div>
  <div class="a" style="left:20px;top:792px;width:228px;height:6px;background:#f4f48a"></div>
  <div class="tile" style="top:668px;height:124px;width:222px;background:#232323">
    <div class="vid" style="left:28px;width:166px;background:#c8ccd2">
      <div class="a" style="left:0;top:0;width:119px;height:42px;background:repeating-linear-gradient(180deg,#e2e4e8 0 3px,#b6bac0 3px 5px)"></div>
      <div class="a" style="left:119px;top:0;width:47px;height:124px;background:linear-gradient(90deg,#c2c6ca,#d2d4d8)"></div>
      <div class="a" style="left:141px;top:3px;width:8px;height:15px;background:#c8c890;border-radius:3px 3px 6px 6px"></div>
      <div class="a" style="left:0;top:40px;width:95px;height:37px;background:#0c1014"></div>
      <div class="a" style="left:0;top:77px;width:119px;height:20px;background:#b8b8ba"></div>
      <div class="a" style="left:18px;top:72px;width:30px;height:14px;background:#dcdcd0"></div>
      <div class="a" style="left:0;top:95px;width:110px;height:29px;background:#6a6a6e"></div>
      <div class="a" style="left:119px;top:52px;width:47px;height:26px;background:#e4e4e2"></div>
      <div class="a" style="left:124px;top:66px;width:42px;height:12px;background:#cfcfcd"></div>
      <div class="a" style="left:126px;top:62px;width:24px;height:52px;background:#8ab352;border-radius:3px"></div>
      <div class="a" style="left:150px;top:78px;width:16px;height:46px;background:repeating-linear-gradient(180deg,#d0d0d0 0 5px,#505050 5px 8px)"></div>
      <div class="a" style="left:118px;top:100px;width:48px;height:24px;background:#1a1a1a"></div>
      <div class="a" style="left:69px;top:44px;width:60px;height:82px;border-radius:50% 50% 38% 38%/45% 45% 55% 55%;background:linear-gradient(180deg,#e4d2ca 0%,#d0b0a2 28%,#c09a8a 60%,#a87e70 100%)"></div>
      <div class="a" style="left:122px;top:74px;width:9px;height:18px;border-radius:50%;background:#c09888"></div>
      <div class="a" style="left:78px;top:76px;width:14px;height:3px;background:#5a4038;border-radius:2px"></div>
      <div class="a" style="left:99px;top:76px;width:14px;height:3px;background:#5a4038;border-radius:2px"></div>
      <div class="a" style="left:92px;top:104px;width:20px;height:2px;background:#8a5a50"></div>
    </div>
    <div class="nm" style="width:134px"></div><svg class="a" style="left:0;top:0;overflow:visible" width="222" height="125"><text x="6.3" y="117.7" textLength="121.3" lengthAdjust="spacingAndGlyphs" font-family="Liberation Sans" font-size="17.5" fill="#f2f2f2">Yasuhiro Suzuki</text></svg>
  </div>
  <div class="a" style="left:25px;top:801px;width:222px;height:15px;background:#222"></div>
</div>
</body></html>
